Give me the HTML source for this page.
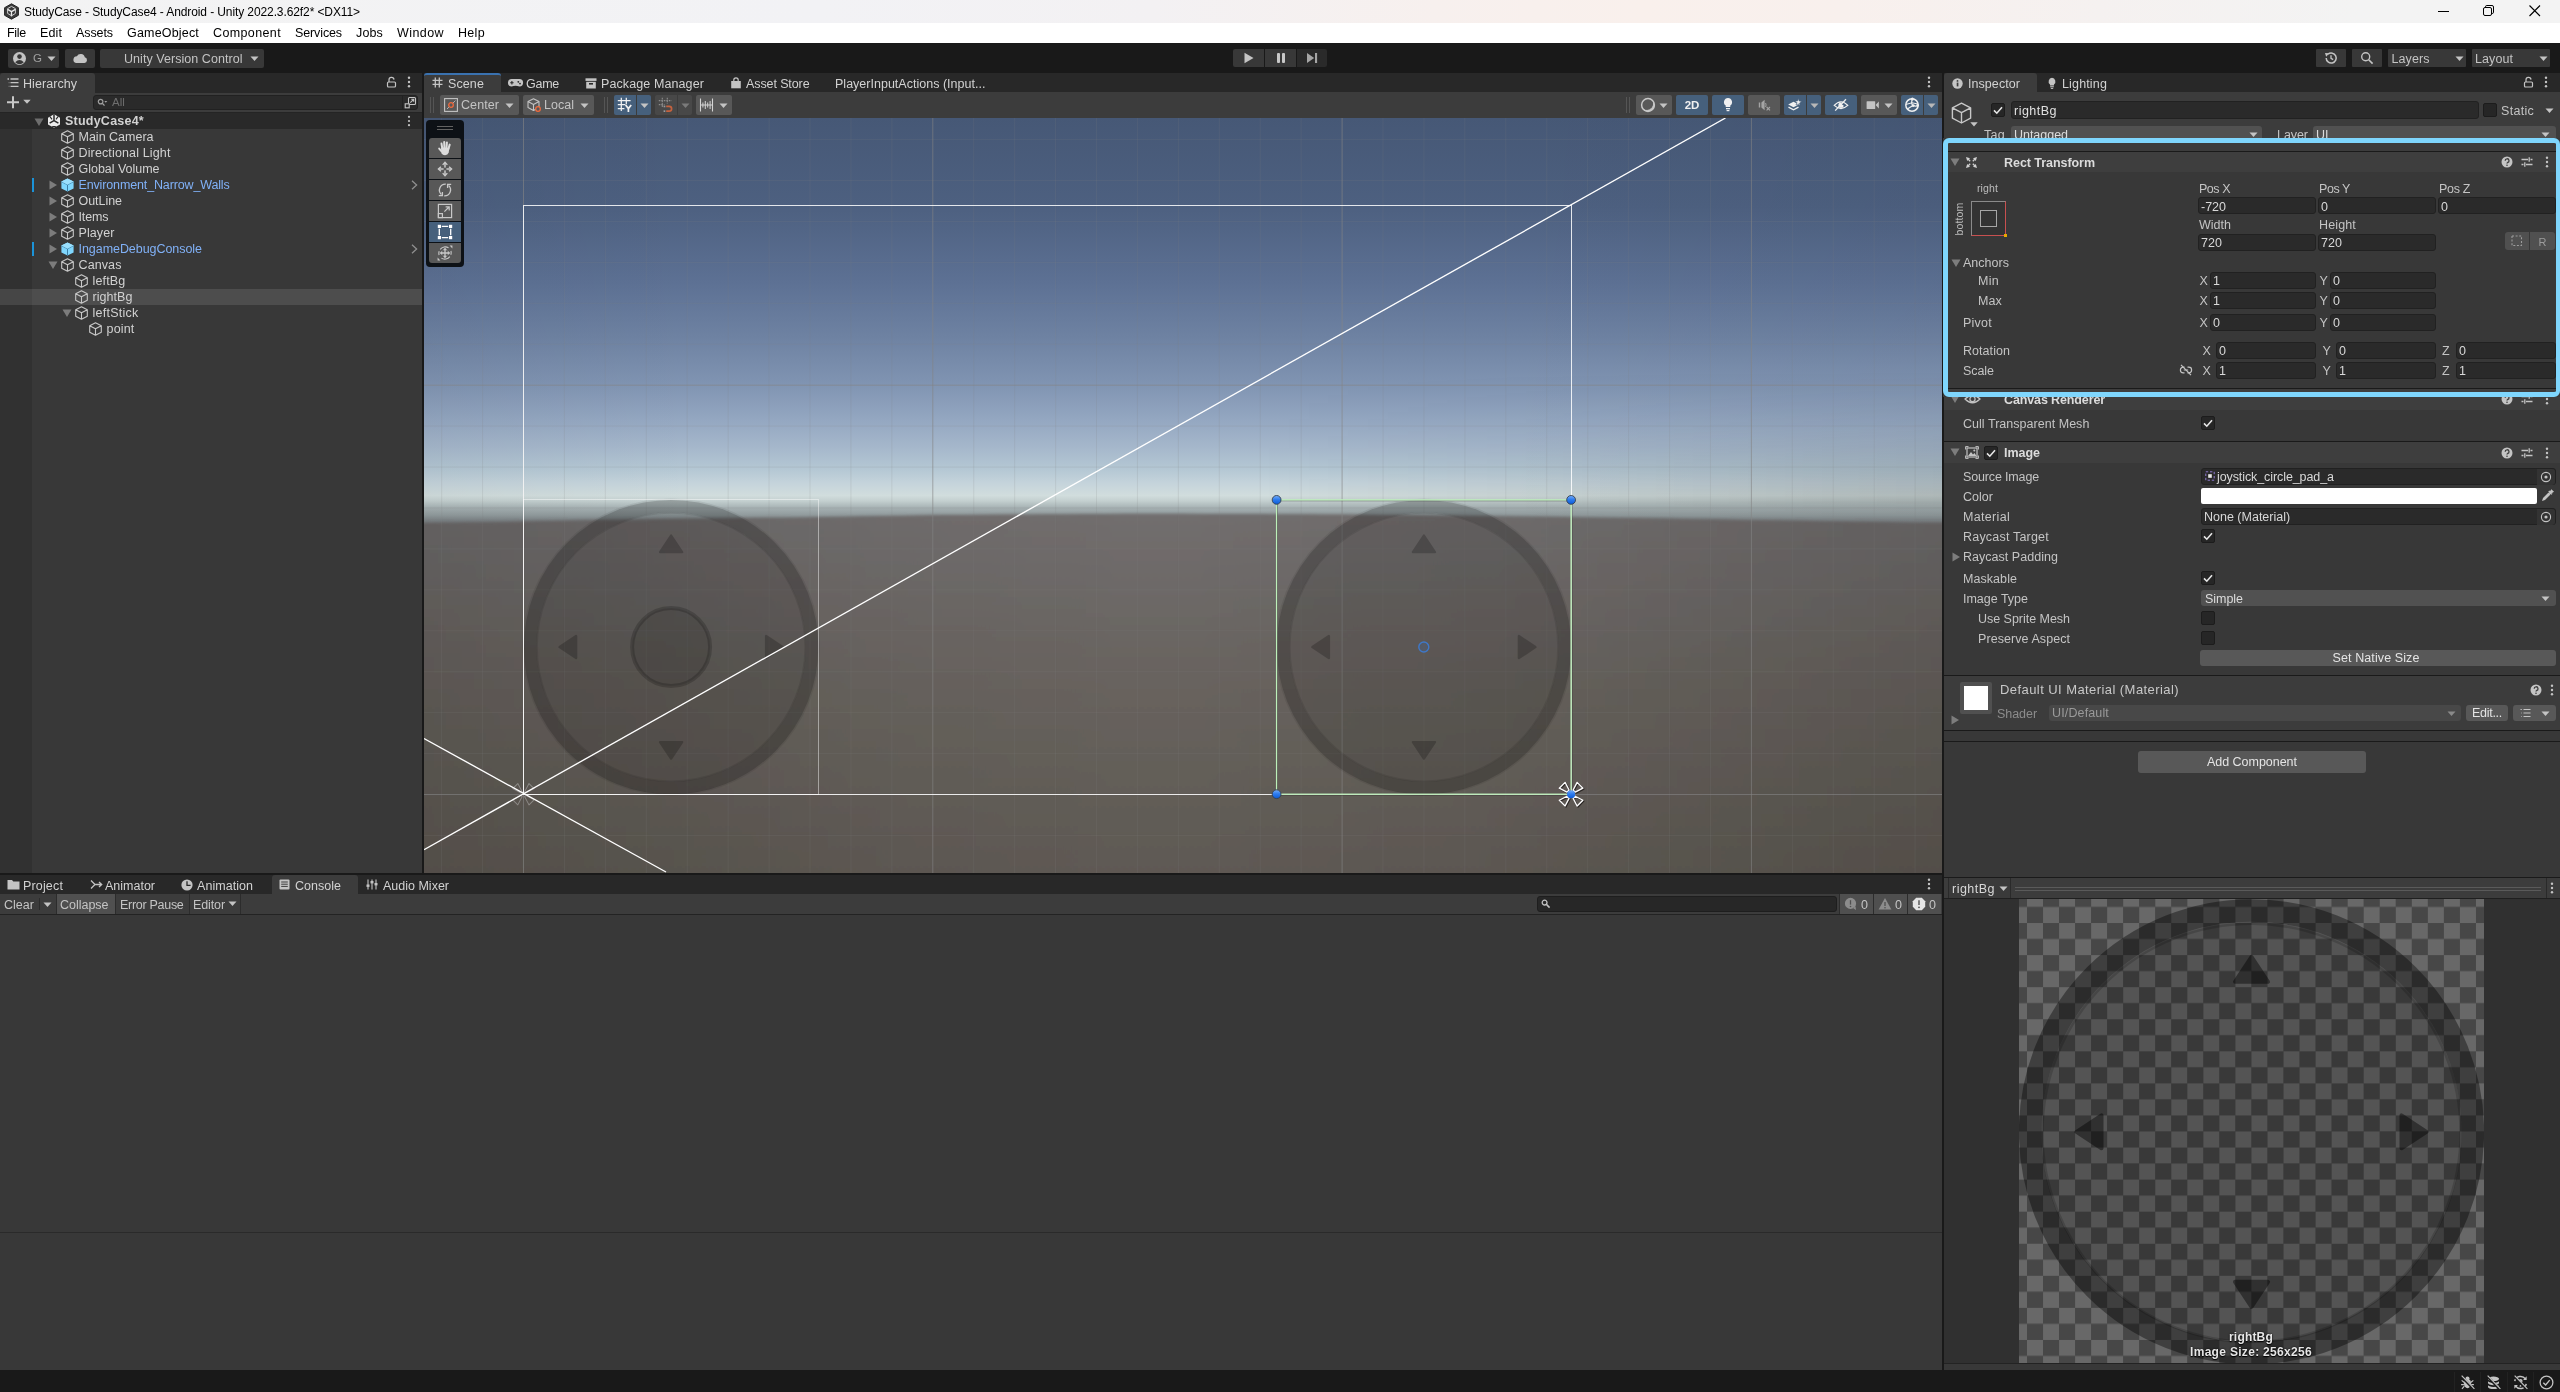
<!DOCTYPE html>
<html><head><meta charset="utf-8"><title>Unity Editor</title>
<style>
html,body{margin:0;padding:0;background:#191919;}
body{width:2560px;height:1392px;position:relative;overflow:hidden;font-family:"Liberation Sans", sans-serif;font-size:12.5px;}
svg{display:block;overflow:visible}
#root{position:absolute;left:0;top:0;width:2560px;height:1392px;will-change:transform;}
</style></head><body><div id="root">
<div style="position:absolute;left:0px;top:0px;width:2560px;height:23px;background:linear-gradient(90deg,#f3f3f3 0%,#f2f2f5 32%,#f3f1f3 45%,#f7f0ee 56%,#f9f0ec 64%,#f8f0ed 72%,#f5f1f0 82%,#f3f3f3 92%,#f3f3f3 100%);"></div>
<svg style="position:absolute;left:3px;top:3px;" width="17" height="17" viewBox="0 0 17 17"><polygon points="8.5,0.8 15.4,4.7 15.4,12.3 8.5,16.2 1.6,12.3 1.6,4.7" fill="#3a3a3a" stroke="#222" stroke-width="1"/>
<path d="M8.5 8.6 L8.5 13.2 M8.5 8.6 L4.6 6.4 M8.5 8.6 L12.4 6.4" stroke="#eee" stroke-width="1.3" fill="none"/>
<path d="M8.5 3.4 L12.4 5.6 L12.4 10.4 L8.5 12.8 L4.6 10.4 L4.6 5.6 Z" stroke="#ddd" stroke-width="0.9" fill="none"/></svg>
<span id="t1" style="position:absolute;top:3.5px;line-height:16px;height:16px;font-size:12px;color:#000;white-space:nowrap;left:24px;letter-spacing:-0.10px;">StudyCase - StudyCase4 - Android - Unity 2022.3.62f2* &lt;DX11&gt;</span>
<svg style="position:absolute;left:2437px;top:5px;" width="14" height="14" viewBox="0 0 14 14"><path d="M1 6.5 H12" stroke="#000" stroke-width="1"/></svg>
<svg style="position:absolute;left:2482px;top:4px;" width="14" height="14" viewBox="0 0 14 14"><rect x="1.5" y="3.5" width="8" height="8" rx="1.5" fill="none" stroke="#000"/><path d="M3.5 3.5 V2.8 Q3.5 1.5 4.8 1.5 H10 Q11.5 1.5 11.5 3 V8.2 Q11.5 9.5 10.2 9.5 H9.5" fill="none" stroke="#000"/></svg>
<svg style="position:absolute;left:2528px;top:4px;" width="14" height="14" viewBox="0 0 14 14"><path d="M1.5 1.5 L12 12 M12 1.5 L1.5 12" stroke="#000" stroke-width="1.1"/></svg>
<div style="position:absolute;left:0px;top:23px;width:2560px;height:20px;background:#ffffff;"></div>
<span id="t2" style="position:absolute;top:25.0px;line-height:16px;height:16px;font-size:12.5px;color:#000;white-space:nowrap;left:7px;letter-spacing:-0.29px;">File</span>
<span id="t3" style="position:absolute;top:25.0px;line-height:16px;height:16px;font-size:12.5px;color:#000;white-space:nowrap;left:40px;letter-spacing:0.11px;">Edit</span>
<span id="t4" style="position:absolute;top:25.0px;line-height:16px;height:16px;font-size:12.5px;color:#000;white-space:nowrap;left:76px;letter-spacing:-0.09px;">Assets</span>
<span id="t5" style="position:absolute;top:25.0px;line-height:16px;height:16px;font-size:12.5px;color:#000;white-space:nowrap;left:127px;letter-spacing:0.18px;">GameObject</span>
<span id="t6" style="position:absolute;top:25.0px;line-height:16px;height:16px;font-size:12.5px;color:#000;white-space:nowrap;left:213px;letter-spacing:0.38px;">Component</span>
<span id="t7" style="position:absolute;top:25.0px;line-height:16px;height:16px;font-size:12.5px;color:#000;white-space:nowrap;left:295px;letter-spacing:-0.12px;">Services</span>
<span id="t8" style="position:absolute;top:25.0px;line-height:16px;height:16px;font-size:12.5px;color:#000;white-space:nowrap;left:356px;letter-spacing:0.15px;">Jobs</span>
<span id="t9" style="position:absolute;top:25.0px;line-height:16px;height:16px;font-size:12.5px;color:#000;white-space:nowrap;left:397px;letter-spacing:0.42px;">Window</span>
<span id="t10" style="position:absolute;top:25.0px;line-height:16px;height:16px;font-size:12.5px;color:#000;white-space:nowrap;left:458px;letter-spacing:0.32px;">Help</span>
<div style="position:absolute;left:0px;top:43px;width:2560px;height:30px;background:#191919;"></div>
<div style="position:absolute;left:8px;top:49px;width:51px;height:19px;background:#383838;border-radius:2px;"></div>
<svg style="position:absolute;left:12px;top:51px;" width="15" height="15" viewBox="0 0 15 15"><circle cx="7.5" cy="7.5" r="6.5" fill="#c4c4c4"/><circle cx="7.5" cy="5.6" r="2.3" fill="#383838"/><path d="M3.2 11.3 Q7.5 6.6 11.8 11.3 Q7.5 15 3.2 11.3Z" fill="#383838"/></svg>
<span id="t11" style="position:absolute;top:51.0px;line-height:15px;height:15px;font-size:11.5px;color:#a0a0a0;white-space:nowrap;left:33px;">G</span>
<svg style="position:absolute;left:47px;top:56px;" width="9" height="6" viewBox="0 0 9 6"><polygon points="0.5,0.5 8.5,0.5 4.5,5" fill="#c4c4c4"/></svg>
<div style="position:absolute;left:65px;top:49px;width:30px;height:19px;background:#383838;border-radius:2px;"></div>
<svg style="position:absolute;left:72px;top:52px;" width="16" height="12" viewBox="0 0 16 12"><path d="M4 11 H12.4 A2.9 2.9 0 0 0 12.8 5.3 A4.2 4.2 0 0 0 4.9 4.3 A3.4 3.4 0 0 0 4 11Z" fill="#c4c4c4"/></svg>
<div style="position:absolute;left:100px;top:49px;width:164px;height:19px;background:#383838;border-radius:2px;"></div>
<span id="t12" style="position:absolute;top:50.5px;line-height:16px;height:16px;font-size:12.5px;color:#c4c4c4;white-space:nowrap;left:124px;letter-spacing:0.05px;">Unity Version Control</span>
<svg style="position:absolute;left:250px;top:56px;" width="9" height="6" viewBox="0 0 9 6"><polygon points="0.5,0.5 8.5,0.5 4.5,5" fill="#c4c4c4"/></svg>
<div style="position:absolute;left:1233px;top:49px;width:31px;height:18px;background:#383838;border-radius:2px 0 0 2px;"></div>
<div style="position:absolute;left:1265px;top:49px;width:31px;height:18px;background:#383838;"></div>
<div style="position:absolute;left:1297px;top:49px;width:30px;height:18px;background:#2a2a2a;border-radius:0 2px 2px 0;"></div>
<svg style="position:absolute;left:1243px;top:52px;" width="12" height="12" viewBox="0 0 12 12"><polygon points="1.5,0.8 10.5,6 1.5,11.2" fill="#c4c4c4"/></svg>
<svg style="position:absolute;left:1275px;top:52px;" width="12" height="12" viewBox="0 0 12 12"><rect x="2" y="1" width="3" height="10" rx="1" fill="#c8c8c8"/><rect x="7" y="1" width="3" height="10" rx="1" fill="#c8c8c8"/></svg>
<svg style="position:absolute;left:1306px;top:52px;" width="12" height="12" viewBox="0 0 12 12"><polygon points="1,1 8.2,6 1,11" fill="#a6a6a6"/><rect x="9" y="1" width="2.1" height="10" fill="#a6a6a6"/></svg>
<div style="position:absolute;left:2316px;top:49px;width:30px;height:18px;background:#383838;border-radius:1px;"></div>
<svg style="position:absolute;left:2324px;top:51px;" width="14" height="14" viewBox="0 0 14 14"><path d="M2.2 7 A5 5 0 1 0 4 3.2" fill="none" stroke="#c4c4c4" stroke-width="1.5"/><polygon points="1,2 5.2,2.2 2.2,5.8" fill="#c4c4c4"/><path d="M7 4.3 V7.3 L9.2 8.6" fill="none" stroke="#c4c4c4" stroke-width="1.3"/></svg>
<div style="position:absolute;left:2352px;top:49px;width:30px;height:18px;background:#383838;border-radius:1px;"></div>
<svg style="position:absolute;left:2360px;top:51px;" width="14" height="14" viewBox="0 0 14 14"><circle cx="5.7" cy="5.7" r="4" fill="none" stroke="#c4c4c4" stroke-width="1.4"/><path d="M8.7 8.7 L12.6 12.6" stroke="#c4c4c4" stroke-width="1.6"/></svg>
<div style="position:absolute;left:2388px;top:49px;width:78px;height:18px;background:#383838;border-radius:1px;"></div>
<span id="t13" style="position:absolute;top:50.5px;line-height:16px;height:16px;font-size:12.5px;color:#c4c4c4;white-space:nowrap;left:2391.5px;letter-spacing:0.08px;">Layers</span>
<svg style="position:absolute;left:2454.5px;top:56px;" width="9" height="6" viewBox="0 0 9 6"><polygon points="0.5,0.5 8.5,0.5 4.5,5" fill="#c4c4c4"/></svg>
<div style="position:absolute;left:2472px;top:49px;width:78px;height:18px;background:#383838;border-radius:1px;"></div>
<span id="t14" style="position:absolute;top:50.5px;line-height:16px;height:16px;font-size:12.5px;color:#c4c4c4;white-space:nowrap;left:2475px;letter-spacing:0.08px;">Layout</span>
<svg style="position:absolute;left:2538.5px;top:56px;" width="9" height="6" viewBox="0 0 9 6"><polygon points="0.5,0.5 8.5,0.5 4.5,5" fill="#c4c4c4"/></svg>
<div style="position:absolute;left:0px;top:1370px;width:2560px;height:22px;background:#191919;"></div>
<div style="position:absolute;left:0px;top:73px;width:2560px;height:1297px;background:#191919;"></div>
<div style="position:absolute;left:0px;top:73px;width:422px;height:20px;background:#282828;"></div>
<div style="position:absolute;left:0px;top:73px;width:95px;height:20px;background:#3c3c3c;border-radius:3px 3px 0 0;"></div>
<svg style="position:absolute;left:7px;top:78px;" width="12" height="10" viewBox="0 0 12 10"><path d="M0.5 1 H2 M3.5 1 H11.5 M3.5 4.7 H11.5 M3.5 8.4 H11.5 M1.8 4.7 H2.3 M1.8 8.4 H2.3" stroke="#c4c4c4" stroke-width="1.3"/></svg>
<span id="t15" style="position:absolute;top:75.5px;line-height:16px;height:16px;font-size:12.5px;color:#d2d2d2;white-space:nowrap;left:23px;letter-spacing:0.06px;">Hierarchy</span>
<svg style="position:absolute;left:386px;top:76px;" width="12" height="12" viewBox="0 0 12 12"><rect x="1.5" y="6" width="8" height="5" rx="1" fill="none" stroke="#c4c4c4" stroke-width="1.2"/><path d="M3 6 V4 A2.5 2.5 0 0 1 8 3.6" fill="none" stroke="#c4c4c4" stroke-width="1.2"/></svg>
<svg style="position:absolute;left:407px;top:76px;" width="4" height="12" viewBox="0 0 4 12"><circle cx="2" cy="1.8" r="1.2" fill="#c4c4c4"/><circle cx="2" cy="6" r="1.2" fill="#c4c4c4"/><circle cx="2" cy="10.2" r="1.2" fill="#c4c4c4"/></svg>
<div style="position:absolute;left:0px;top:93px;width:422px;height:20px;background:#3c3c3c;"></div>
<svg style="position:absolute;left:6px;top:96px;" width="14" height="13" viewBox="0 0 14 13"><path d="M7 0.3 V12.3 M1 6.3 H13" stroke="#c8c8c8" stroke-width="2"/></svg>
<svg style="position:absolute;left:23px;top:99px;" width="8" height="6" viewBox="0 0 8 6"><polygon points="0.3,0.8 7.7,0.8 4,4.8" fill="#c4c4c4"/></svg>
<div style="position:absolute;left:93px;top:95px;width:325px;height:15px;background:#2a2a2a;border-radius:3px;border:1px solid #212121;box-sizing:border-box;"></div>
<svg style="position:absolute;left:97px;top:98px;" width="11" height="9" viewBox="0 0 11 9"><circle cx="3.6" cy="3.6" r="2.3" fill="none" stroke="#a0a0a0" stroke-width="1.2"/><path d="M5.3 5.3 L7.5 7.6" stroke="#a0a0a0" stroke-width="1.3"/><polygon points="7.3,3 10.3,3 8.8,4.8" fill="#a0a0a0"/></svg>
<span id="t16" style="position:absolute;top:95.0px;line-height:15px;height:15px;font-size:11.5px;color:#6e6e6e;white-space:nowrap;left:112px;">All</span>
<div style="position:absolute;left:402px;top:95px;width:1px;height:15px;background:#212121;"></div>
<svg style="position:absolute;left:404px;top:96px;" width="13" height="13" viewBox="0 0 13 13"><rect x="4.5" y="1.5" width="7" height="7" rx="1" fill="none" stroke="#c4c4c4" stroke-width="1.1"/><rect x="1.2" y="7.8" width="4" height="4" fill="#2a2a2a" stroke="#c4c4c4" stroke-width="1.1"/><path d="M6.3 6.7 L9.6 3.4 M7.2 3.3 H9.7 V5.8" fill="none" stroke="#c4c4c4" stroke-width="1.1"/></svg>
<div style="position:absolute;left:0px;top:113px;width:422px;height:760px;background:#383838;"></div>
<div style="position:absolute;left:0px;top:129px;width:32px;height:744px;background:#313131;"></div>
<div style="position:absolute;left:0px;top:113px;width:422px;height:16px;background:#292929;"></div>
<div style="position:absolute;left:0px;top:112px;width:422px;height:1px;background:#242424;"></div>
<svg style="position:absolute;left:34px;top:117.5px;" width="10" height="9" viewBox="0 0 10 9"><polygon points="0.5,0.5 9.5,0.5 5,8" fill="#6e6e6e"/></svg>
<svg style="position:absolute;left:47px;top:114px;" width="14" height="14" viewBox="0 0 14 14"><path d="M7 0.3 L13 3.7 V10.4 L7 13.8 L1 10.4 V3.7 Z" fill="#ececec"/>
<path d="M7 0.3 V6.6 L2.6 9.2 M7 6.6 L11.4 9.2" stroke="#292929" stroke-width="1.5" fill="none"/>
<path d="M3 2.6 L5 5.4 M11 2.6 L9 5.4 M5.2 12.6 H8.8" stroke="#292929" stroke-width="1.1"/></svg>
<span id="t17" style="position:absolute;top:113.0px;line-height:16px;height:16px;font-size:12.5px;color:#d2d2d2;white-space:nowrap;font-weight:bold;left:65px;letter-spacing:0.23px;">StudyCase4*</span>
<svg style="position:absolute;left:407px;top:115px;" width="4" height="12" viewBox="0 0 4 12"><circle cx="2" cy="1.8" r="1.1" fill="#c4c4c4"/><circle cx="2" cy="6" r="1.1" fill="#c4c4c4"/><circle cx="2" cy="10.2" r="1.1" fill="#c4c4c4"/></svg>
<svg style="position:absolute;left:61px;top:130px;" width="13" height="14" viewBox="0 0 13 14"><path d="M6.5 0.8 L12.3 3.8 V10.2 L6.5 13.2 L0.7 10.2 V3.8 Z M0.7 3.8 L6.5 6.8 L12.3 3.8 M6.5 6.8 V13.2" fill="none" stroke="#c8c8c8" stroke-width="1.1" stroke-linejoin="round"/></svg>
<span id="t18" style="position:absolute;top:129.0px;line-height:16px;height:16px;font-size:12.5px;color:#d2d2d2;white-space:nowrap;left:78.5px;letter-spacing:-0.00px;">Main Camera</span>
<svg style="position:absolute;left:61px;top:146px;" width="13" height="14" viewBox="0 0 13 14"><path d="M6.5 0.8 L12.3 3.8 V10.2 L6.5 13.2 L0.7 10.2 V3.8 Z M0.7 3.8 L6.5 6.8 L12.3 3.8 M6.5 6.8 V13.2" fill="none" stroke="#c8c8c8" stroke-width="1.1" stroke-linejoin="round"/></svg>
<span id="t19" style="position:absolute;top:145.0px;line-height:16px;height:16px;font-size:12.5px;color:#d2d2d2;white-space:nowrap;left:78.5px;letter-spacing:0.14px;">Directional Light</span>
<svg style="position:absolute;left:61px;top:162px;" width="13" height="14" viewBox="0 0 13 14"><path d="M6.5 0.8 L12.3 3.8 V10.2 L6.5 13.2 L0.7 10.2 V3.8 Z M0.7 3.8 L6.5 6.8 L12.3 3.8 M6.5 6.8 V13.2" fill="none" stroke="#c8c8c8" stroke-width="1.1" stroke-linejoin="round"/></svg>
<span id="t20" style="position:absolute;top:161.0px;line-height:16px;height:16px;font-size:12.5px;color:#d2d2d2;white-space:nowrap;left:78.5px;letter-spacing:-0.02px;">Global Volume</span>
<svg style="position:absolute;left:61px;top:178px;" width="13" height="14" viewBox="0 0 13 14"><path d="M6.5 0.4 L12.6 3.6 V10.4 L6.5 13.6 L0.4 10.4 V3.6 Z" fill="#7fd6fd"/><path d="M0.4 3.6 L6.5 6.8 L12.6 3.6 M6.5 6.8 V13.6" fill="none" stroke="#3a7ea6" stroke-width="1"/><path d="M6.5 0.4 L12.6 3.6 L6.5 6.8 L0.4 3.6Z" fill="#9adffd"/></svg>
<span id="t21" style="position:absolute;top:177.0px;line-height:16px;height:16px;font-size:12.5px;color:#80b1f7;white-space:nowrap;left:78.5px;letter-spacing:-0.14px;">Environment_Narrow_Walls</span>
<svg style="position:absolute;left:49px;top:180px;" width="9" height="10" viewBox="0 0 9 10"><polygon points="0.5,0.5 8,5 0.5,9.5" fill="#7c7c7c"/></svg>
<div style="position:absolute;left:32px;top:178px;width:2px;height:14px;background:#1b93d8;"></div>
<svg style="position:absolute;left:411px;top:180px;" width="7" height="10" viewBox="0 0 7 10"><path d="M1 0.8 L5.6 5 L1 9.2" fill="none" stroke="#8f8f8f" stroke-width="1.3"/></svg>
<svg style="position:absolute;left:61px;top:194px;" width="13" height="14" viewBox="0 0 13 14"><path d="M6.5 0.8 L12.3 3.8 V10.2 L6.5 13.2 L0.7 10.2 V3.8 Z M0.7 3.8 L6.5 6.8 L12.3 3.8 M6.5 6.8 V13.2" fill="none" stroke="#c8c8c8" stroke-width="1.1" stroke-linejoin="round"/></svg>
<span id="t22" style="position:absolute;top:193.0px;line-height:16px;height:16px;font-size:12.5px;color:#d2d2d2;white-space:nowrap;left:78.5px;letter-spacing:-0.04px;">OutLine</span>
<svg style="position:absolute;left:49px;top:196px;" width="9" height="10" viewBox="0 0 9 10"><polygon points="0.5,0.5 8,5 0.5,9.5" fill="#7c7c7c"/></svg>
<svg style="position:absolute;left:61px;top:210px;" width="13" height="14" viewBox="0 0 13 14"><path d="M6.5 0.8 L12.3 3.8 V10.2 L6.5 13.2 L0.7 10.2 V3.8 Z M0.7 3.8 L6.5 6.8 L12.3 3.8 M6.5 6.8 V13.2" fill="none" stroke="#c8c8c8" stroke-width="1.1" stroke-linejoin="round"/></svg>
<span id="t23" style="position:absolute;top:209.0px;line-height:16px;height:16px;font-size:12.5px;color:#d2d2d2;white-space:nowrap;left:78.5px;letter-spacing:-0.11px;">Items</span>
<svg style="position:absolute;left:49px;top:212px;" width="9" height="10" viewBox="0 0 9 10"><polygon points="0.5,0.5 8,5 0.5,9.5" fill="#7c7c7c"/></svg>
<svg style="position:absolute;left:61px;top:226px;" width="13" height="14" viewBox="0 0 13 14"><path d="M6.5 0.8 L12.3 3.8 V10.2 L6.5 13.2 L0.7 10.2 V3.8 Z M0.7 3.8 L6.5 6.8 L12.3 3.8 M6.5 6.8 V13.2" fill="none" stroke="#c8c8c8" stroke-width="1.1" stroke-linejoin="round"/></svg>
<span id="t24" style="position:absolute;top:225.0px;line-height:16px;height:16px;font-size:12.5px;color:#d2d2d2;white-space:nowrap;left:78.5px;letter-spacing:0.09px;">Player</span>
<svg style="position:absolute;left:49px;top:228px;" width="9" height="10" viewBox="0 0 9 10"><polygon points="0.5,0.5 8,5 0.5,9.5" fill="#7c7c7c"/></svg>
<svg style="position:absolute;left:61px;top:242px;" width="13" height="14" viewBox="0 0 13 14"><path d="M6.5 0.4 L12.6 3.6 V10.4 L6.5 13.6 L0.4 10.4 V3.6 Z" fill="#7fd6fd"/><path d="M0.4 3.6 L6.5 6.8 L12.6 3.6 M6.5 6.8 V13.6" fill="none" stroke="#3a7ea6" stroke-width="1"/><path d="M6.5 0.4 L12.6 3.6 L6.5 6.8 L0.4 3.6Z" fill="#9adffd"/></svg>
<span id="t25" style="position:absolute;top:241.0px;line-height:16px;height:16px;font-size:12.5px;color:#80b1f7;white-space:nowrap;left:78.5px;letter-spacing:-0.05px;">IngameDebugConsole</span>
<svg style="position:absolute;left:49px;top:244px;" width="9" height="10" viewBox="0 0 9 10"><polygon points="0.5,0.5 8,5 0.5,9.5" fill="#7c7c7c"/></svg>
<div style="position:absolute;left:32px;top:242px;width:2px;height:14px;background:#1b93d8;"></div>
<svg style="position:absolute;left:411px;top:244px;" width="7" height="10" viewBox="0 0 7 10"><path d="M1 0.8 L5.6 5 L1 9.2" fill="none" stroke="#8f8f8f" stroke-width="1.3"/></svg>
<svg style="position:absolute;left:61px;top:258px;" width="13" height="14" viewBox="0 0 13 14"><path d="M6.5 0.8 L12.3 3.8 V10.2 L6.5 13.2 L0.7 10.2 V3.8 Z M0.7 3.8 L6.5 6.8 L12.3 3.8 M6.5 6.8 V13.2" fill="none" stroke="#c8c8c8" stroke-width="1.1" stroke-linejoin="round"/></svg>
<span id="t26" style="position:absolute;top:257.0px;line-height:16px;height:16px;font-size:12.5px;color:#d2d2d2;white-space:nowrap;left:78.5px;letter-spacing:0.10px;">Canvas</span>
<svg style="position:absolute;left:48px;top:261px;" width="10" height="9" viewBox="0 0 10 9"><polygon points="0.5,0.5 9.5,0.5 5,8" fill="#7c7c7c"/></svg>
<svg style="position:absolute;left:75px;top:274px;" width="13" height="14" viewBox="0 0 13 14"><path d="M6.5 0.8 L12.3 3.8 V10.2 L6.5 13.2 L0.7 10.2 V3.8 Z M0.7 3.8 L6.5 6.8 L12.3 3.8 M6.5 6.8 V13.2" fill="none" stroke="#c8c8c8" stroke-width="1.1" stroke-linejoin="round"/></svg>
<span id="t27" style="position:absolute;top:273.0px;line-height:16px;height:16px;font-size:12.5px;color:#d2d2d2;white-space:nowrap;left:92.5px;letter-spacing:0.17px;">leftBg</span>
<div style="position:absolute;left:0px;top:289px;width:422px;height:16px;background:#4d4d4d;"></div>
<div style="position:absolute;left:0px;top:289px;width:32px;height:16px;background:#464646;"></div>
<svg style="position:absolute;left:75px;top:290px;" width="13" height="14" viewBox="0 0 13 14"><path d="M6.5 0.8 L12.3 3.8 V10.2 L6.5 13.2 L0.7 10.2 V3.8 Z M0.7 3.8 L6.5 6.8 L12.3 3.8 M6.5 6.8 V13.2" fill="none" stroke="#c8c8c8" stroke-width="1.1" stroke-linejoin="round"/></svg>
<span id="t28" style="position:absolute;top:289.0px;line-height:16px;height:16px;font-size:12.5px;color:#d2d2d2;white-space:nowrap;left:92.5px;letter-spacing:0.06px;">rightBg</span>
<svg style="position:absolute;left:75px;top:306px;" width="13" height="14" viewBox="0 0 13 14"><path d="M6.5 0.8 L12.3 3.8 V10.2 L6.5 13.2 L0.7 10.2 V3.8 Z M0.7 3.8 L6.5 6.8 L12.3 3.8 M6.5 6.8 V13.2" fill="none" stroke="#c8c8c8" stroke-width="1.1" stroke-linejoin="round"/></svg>
<span id="t29" style="position:absolute;top:305.0px;line-height:16px;height:16px;font-size:12.5px;color:#d2d2d2;white-space:nowrap;left:92.5px;letter-spacing:0.25px;">leftStick</span>
<svg style="position:absolute;left:62px;top:309px;" width="10" height="9" viewBox="0 0 10 9"><polygon points="0.5,0.5 9.5,0.5 5,8" fill="#7c7c7c"/></svg>
<svg style="position:absolute;left:89px;top:322px;" width="13" height="14" viewBox="0 0 13 14"><path d="M6.5 0.8 L12.3 3.8 V10.2 L6.5 13.2 L0.7 10.2 V3.8 Z M0.7 3.8 L6.5 6.8 L12.3 3.8 M6.5 6.8 V13.2" fill="none" stroke="#c8c8c8" stroke-width="1.1" stroke-linejoin="round"/></svg>
<span id="t30" style="position:absolute;top:321.0px;line-height:16px;height:16px;font-size:12.5px;color:#d2d2d2;white-space:nowrap;left:106.5px;letter-spacing:0.18px;">point</span>
<div style="position:absolute;left:424px;top:73px;width:1518px;height:19px;background:#282828;"></div>
<div style="position:absolute;left:424px;top:73px;width:77px;height:19px;background:#3c3c3c;border-radius:3px 3px 0 0;border-top:2px solid #3a72b0;box-sizing:border-box;"></div>
<svg style="position:absolute;left:432px;top:77px;" width="11" height="11" viewBox="0 0 11 11"><path d="M3.3 0.5 V10.5 M7.3 0.5 V10.5 M0.5 3.3 H10.5 M0.5 7.3 H10.5" stroke="#c4c4c4" stroke-width="1.3"/></svg>
<span id="t31" style="position:absolute;top:75.5px;line-height:16px;height:16px;font-size:12.5px;color:#d2d2d2;white-space:nowrap;left:448px;letter-spacing:0.11px;">Scene</span>
<svg style="position:absolute;left:508px;top:78px;" width="15" height="10" viewBox="0 0 15 10"><path d="M3.6 1 H11.4 A3.6 3.6 0 0 1 11.4 8.4 Q7.5 7 3.6 8.4 A3.6 3.6 0 0 1 3.6 1Z" fill="#c4c4c4"/><path d="M3.9 3 V6.4 M2.2 4.7 H5.6" stroke="#282828" stroke-width="1.1"/><circle cx="10.3" cy="3.8" r="0.9" fill="#282828"/><circle cx="12" cy="5.6" r="0.9" fill="#282828"/></svg>
<span id="t32" style="position:absolute;top:75.5px;line-height:16px;height:16px;font-size:12.5px;color:#d2d2d2;white-space:nowrap;left:526px;letter-spacing:-0.26px;">Game</span>
<svg style="position:absolute;left:585px;top:78px;" width="12" height="11" viewBox="0 0 12 11"><rect x="0.5" y="0.3" width="11" height="2.6" fill="#c4c4c4"/><path d="M1.2 3.8 H10.8 V10.5 H1.2Z" fill="#c4c4c4"/><rect x="4" y="5" width="4" height="1.6" fill="#282828"/></svg>
<span id="t33" style="position:absolute;top:75.5px;line-height:16px;height:16px;font-size:12.5px;color:#d2d2d2;white-space:nowrap;left:601px;letter-spacing:0.10px;">Package Manager</span>
<svg style="position:absolute;left:730px;top:77px;" width="12" height="12" viewBox="0 0 12 12"><path d="M1.2 4 H10.8 V11.3 H1.2Z" fill="#c4c4c4"/><path d="M3.8 4.5 V3 A2.2 2.2 0 0 1 8.2 3 V4.5" fill="none" stroke="#c4c4c4" stroke-width="1.2"/></svg>
<span id="t34" style="position:absolute;top:75.5px;line-height:16px;height:16px;font-size:12.5px;color:#d2d2d2;white-space:nowrap;left:746px;letter-spacing:-0.10px;">Asset Store</span>
<span id="t35" style="position:absolute;top:75.5px;line-height:16px;height:16px;font-size:12.5px;color:#d2d2d2;white-space:nowrap;left:835px;letter-spacing:0.01px;">PlayerInputActions (Input...</span>
<svg style="position:absolute;left:1927px;top:76px;" width="4" height="12" viewBox="0 0 4 12"><circle cx="2" cy="1.8" r="1.2" fill="#c4c4c4"/><circle cx="2" cy="6" r="1.2" fill="#c4c4c4"/><circle cx="2" cy="10.2" r="1.2" fill="#c4c4c4"/></svg>
<div style="position:absolute;left:424px;top:92px;width:1518px;height:26px;background:#3c3c3c;"></div>
<div style="position:absolute;left:430px;top:97px;width:1px;height:16px;background:#555;"></div>
<div style="position:absolute;left:433px;top:97px;width:1px;height:16px;background:#555;"></div>
<div style="position:absolute;left:604px;top:97px;width:1px;height:16px;background:#555;"></div>
<div style="position:absolute;left:607px;top:97px;width:1px;height:16px;background:#555;"></div>
<div style="position:absolute;left:1626px;top:97px;width:1px;height:16px;background:#555;"></div>
<div style="position:absolute;left:1629px;top:97px;width:1px;height:16px;background:#555;"></div>
<div style="position:absolute;left:440px;top:95px;width:79px;height:20px;background:#585858;border-radius:2px;"></div>
<svg style="position:absolute;left:444px;top:98px;" width="14" height="14" viewBox="0 0 14 14"><rect x="0.6" y="0.6" width="12.8" height="12.8" fill="none" stroke="#c4c4c4" stroke-width="1.1"/><path d="M3 11 L11.5 2.5" stroke="#c4c4c4" stroke-width="0.8"/><circle cx="7" cy="7" r="2.3" fill="#585858" stroke="#f0693c" stroke-width="1.3"/></svg>
<span id="t36" style="position:absolute;top:97.0px;line-height:16px;height:16px;font-size:12.5px;color:#c4c4c4;white-space:nowrap;left:461px;letter-spacing:0.08px;">Center</span>
<svg style="position:absolute;left:504.5px;top:102.5px;" width="9" height="6" viewBox="0 0 9 6"><polygon points="0.5,0.5 8.5,0.5 4.5,5" fill="#c4c4c4"/></svg>
<div style="position:absolute;left:523px;top:95px;width:71px;height:20px;background:#585858;border-radius:2px;"></div>
<svg style="position:absolute;left:527px;top:98px;" width="15" height="15" viewBox="0 0 15 15"><path d="M6.5 0.8 L12 3.6 V9.6 L6.5 12.4 L1 9.6 V3.6 Z M1 3.6 L6.5 6.4 L12 3.6 M6.5 6.4 V12.4" fill="none" stroke="#c4c4c4" stroke-width="1.1" stroke-linejoin="round"/><circle cx="11" cy="11" r="2.3" fill="#585858" stroke="#f0693c" stroke-width="1.3"/></svg>
<span id="t37" style="position:absolute;top:97.0px;line-height:16px;height:16px;font-size:12.5px;color:#c4c4c4;white-space:nowrap;left:544px;letter-spacing:0.02px;">Local</span>
<svg style="position:absolute;left:579.5px;top:102.5px;" width="9" height="6" viewBox="0 0 9 6"><polygon points="0.5,0.5 8.5,0.5 4.5,5" fill="#c4c4c4"/></svg>
<div style="position:absolute;left:614px;top:95px;width:22px;height:20px;background:#46607c;border-radius:2px 0 0 2px;"></div>
<div style="position:absolute;left:637px;top:95px;width:14px;height:20px;background:#46607c;border-radius:0 2px 2px 0;"></div>
<svg style="position:absolute;left:617px;top:97px;" width="16" height="16" viewBox="0 0 16 16"><path d="M4.3 0.8 V14 M9.3 0.8 V7.2 M0.8 3.6 H13.6 M0.8 7.6 H8.4 M0.8 11.6 H7.4" stroke="#f2f2f2" stroke-width="1.25"/><path d="M8.6 8 L11.4 11.6 L14.2 8 M11.4 11.6 V15" stroke="#f2f2f2" stroke-width="1.7" fill="none"/></svg>
<svg style="position:absolute;left:639.5px;top:102.5px;" width="9" height="6" viewBox="0 0 9 6"><polygon points="0.5,0.5 8.5,0.5 4.5,5" fill="#c4c4c4"/></svg>
<div style="position:absolute;left:655px;top:95px;width:22px;height:20px;background:#484848;border-radius:2px 0 0 2px;"></div>
<div style="position:absolute;left:678px;top:95px;width:14px;height:20px;background:#484848;border-radius:0 2px 2px 0;"></div>
<svg style="position:absolute;left:658px;top:97px;" width="16" height="16" viewBox="0 0 16 16"><path d="M4.3 0.8 V10 M9.3 0.8 V6.5 M0.8 3.6 H13.6 M0.8 7.6 H6.5" stroke="#8c8c8c" stroke-width="1.1" stroke-dasharray="1.6 0.9"/><path d="M8.2 9.4 H11.2 A2.4 2.4 0 0 1 11.2 14.2 H8.2" stroke="#c4623f" stroke-width="1.7" fill="none"/><rect x="5.6" y="8.6" width="1.7" height="1.7" fill="#9a9a9a"/><rect x="5.6" y="13.3" width="1.7" height="1.7" fill="#9a9a9a"/></svg>
<svg style="position:absolute;left:680.5px;top:102.5px;" width="9" height="6" viewBox="0 0 9 6"><polygon points="0.5,0.5 8.5,0.5 4.5,5" fill="#7a7a7a"/></svg>
<div style="position:absolute;left:696px;top:95px;width:36px;height:20px;background:#585858;border-radius:2px;"></div>
<svg style="position:absolute;left:699px;top:98px;" width="16" height="14" viewBox="0 0 16 14"><path d="M1.5 0.5 V13.5 M13.5 0.5 V13.5 M1.5 7 H13.5" stroke="#d4d4d4" stroke-width="1.1"/><path d="M3.9 4.5 V9.5 M6.3 3 V11 M8.7 4.5 V9.5 M11.1 3 V11" stroke="#d4d4d4" stroke-width="1"/></svg>
<svg style="position:absolute;left:718.5px;top:102.5px;" width="9" height="6" viewBox="0 0 9 6"><polygon points="0.5,0.5 8.5,0.5 4.5,5" fill="#c4c4c4"/></svg>
<div style="position:absolute;left:1636px;top:95px;width:36px;height:20px;background:#585858;border-radius:2px;"></div>
<svg style="position:absolute;left:1640px;top:97px;" width="16" height="16" viewBox="0 0 16 16"><circle cx="8" cy="8" r="6.4" fill="none" stroke="#c8c8c8" stroke-width="1.5"/><path d="M13.6 5.2 A6.4 6.4 0 0 1 4 13 A7.2 7.2 0 0 0 13.6 5.2Z" fill="#c8c8c8" stroke="#c8c8c8" stroke-width="0.8"/></svg>
<svg style="position:absolute;left:1658.5px;top:102.5px;" width="9" height="6" viewBox="0 0 9 6"><polygon points="0.5,0.5 8.5,0.5 4.5,5" fill="#c4c4c4"/></svg>
<div style="position:absolute;left:1676px;top:95px;width:32px;height:20px;background:#46607c;border-radius:2px;"></div>
<span id="t38" style="position:absolute;top:97.5px;line-height:15px;height:15px;font-size:11.5px;color:#f0f0f0;white-space:nowrap;font-weight:bold;left:1692px;transform:translateX(-50%);">2D</span>
<div style="position:absolute;left:1712px;top:95px;width:32px;height:20px;background:#46607c;border-radius:2px;"></div>
<svg style="position:absolute;left:1722px;top:97px;" width="12" height="16" viewBox="0 0 12 16"><path d="M6 1 A4.2 4.2 0 0 1 8.3 8.6 V10 H3.7 V8.6 A4.2 4.2 0 0 1 6 1Z" fill="#f0f0f0"/><rect x="4" y="11" width="4" height="1.3" fill="#f0f0f0"/><rect x="4.6" y="13" width="2.8" height="1.2" fill="#f0f0f0"/></svg>
<div style="position:absolute;left:1748px;top:95px;width:32px;height:20px;background:#585858;border-radius:2px;"></div>
<svg style="position:absolute;left:1757px;top:98px;" width="16" height="14" viewBox="0 0 16 14"><path d="M1.8 4.6 H3.2 V9.4 H1.8Z M4.4 4.6 L7.6 1.8 V12.2 L4.4 9.4Z" fill="#a4a4a4"/><path d="M8.6 5 Q9.6 7 8.6 9" stroke="#a4a4a4" fill="none" stroke-width="1"/><path d="M9.6 9 L13 12.4 M13 9 L9.6 12.4" stroke="#a4a4a4" stroke-width="1.1"/></svg>
<div style="position:absolute;left:1784px;top:95px;width:22px;height:20px;background:#46607c;border-radius:2px 0 0 2px;"></div>
<div style="position:absolute;left:1807px;top:95px;width:14px;height:20px;background:#46607c;border-radius:0 2px 2px 0;"></div>
<svg style="position:absolute;left:1787px;top:98px;" width="16" height="14" viewBox="0 0 16 14"><path d="M1.5 9.2 L6.5 11.8 L11.5 9.2" stroke="#f0f0f0" fill="none" stroke-width="1.4"/><path d="M1.2 6.4 L6.5 3.8 L11.8 6.4 L6.5 9.2Z" fill="#f0f0f0"/><path d="M11.3 0.4 L12.2 2.9 L14.8 3.5 L12.6 5 L13 7.6 L11.3 6 L9 7 L9.9 4.7 L8.2 2.9 L10.6 2.9Z" fill="#f0f0f0" stroke="#46607c" stroke-width="0.6"/></svg>
<svg style="position:absolute;left:1809.5px;top:102.5px;" width="9" height="6" viewBox="0 0 9 6"><polygon points="0.5,0.5 8.5,0.5 4.5,5" fill="#b8b8b8"/></svg>
<div style="position:absolute;left:1825px;top:95px;width:32px;height:20px;background:#46607c;border-radius:2px;"></div>
<svg style="position:absolute;left:1833px;top:98px;" width="16" height="14" viewBox="0 0 16 14"><path d="M1.2 7.4 Q8 0.2 14.8 7.4 Q8 13.6 1.2 7.4Z" fill="none" stroke="#f0f0f0" stroke-width="1.2"/><path d="M8 4.6 A2.6 2.6 0 1 0 10.6 7.2 Q9 7.4 8 4.6Z" fill="#f0f0f0"/><path d="M2.2 12.6 L13 1.2" stroke="#f0f0f0" stroke-width="1.3"/></svg>
<div style="position:absolute;left:1861px;top:95px;width:36px;height:20px;background:#585858;border-radius:2px;"></div>
<svg style="position:absolute;left:1866px;top:99px;" width="15" height="12" viewBox="0 0 15 12"><rect x="0.6" y="2.2" width="8.6" height="7.8" rx="0.6" fill="#c4c4c4"/><path d="M9.6 6.1 L12.8 2.6 V9.6Z" fill="#c4c4c4"/></svg>
<svg style="position:absolute;left:1884px;top:102.5px;" width="9" height="6" viewBox="0 0 9 6"><polygon points="0.5,0.5 8.5,0.5 4.5,5" fill="#c4c4c4"/></svg>
<div style="position:absolute;left:1901px;top:95px;width:22px;height:20px;background:#46607c;border-radius:2px 0 0 2px;"></div>
<div style="position:absolute;left:1924px;top:95px;width:14px;height:20px;background:#46607c;border-radius:0 2px 2px 0;"></div>
<svg style="position:absolute;left:1904px;top:97px;" width="16" height="16" viewBox="0 0 16 16"><circle cx="8" cy="8" r="6.2" fill="none" stroke="#f0f0f0" stroke-width="1.5"/><path d="M8.4 1.8 Q6.6 7 9 8.6 Q12 9.6 14 8.4 M9 8.6 Q6 10.6 3.4 12" stroke="#f0f0f0" stroke-width="1.2" fill="none"/><path d="M2 7.4 Q8 4.4 14 7" stroke="#f0f0f0" stroke-width="1" fill="none"/><circle cx="8.4" cy="2" r="1.5" fill="#f0f0f0"/><circle cx="9.2" cy="8.6" r="1.4" fill="#f0f0f0"/><circle cx="13.6" cy="8.4" r="1.3" fill="#f0f0f0"/></svg>
<svg style="position:absolute;left:1926.5px;top:102.5px;" width="9" height="6" viewBox="0 0 9 6"><polygon points="0.5,0.5 8.5,0.5 4.5,5" fill="#b8b8b8"/></svg>
<div style="position:absolute;left:424px;top:118px;width:1518px;height:755px;background:linear-gradient(180deg, rgb(70, 88, 118) 0.0px, rgb(77, 96, 128) 88.0px, rgb(93, 113, 148) 165.0px, rgb(110, 130, 162) 219.0px, rgb(128, 148, 178) 266.0px, rgb(148, 167, 193) 302.0px, rgb(165, 183, 203) 329.0px, rgb(181, 200, 212) 352.0px, rgb(196, 211, 219) 364.5px, rgb(209, 221, 221) 377.6px, rgb(195, 207, 207) 383.0px, rgb(178, 190, 191) 387.0px, rgb(165, 176, 178) 390.0px, rgb(145, 155, 157) 397.0px, rgb(125, 132, 135) 402.0px, rgb(110, 112, 114) 408.0px);overflow:hidden;"><div style="position:absolute;left:0;top:0;width:1518px;height:755px;background:linear-gradient(90deg,rgba(0,0,0,0.035) 0%,rgba(0,0,0,0) 18%,rgba(0,0,0,0) 70%,rgba(0,0,0,0.03) 100%);"></div><div style="position:absolute;left:0;top:252px;width:1518px;height:150px;background:linear-gradient(90deg,rgba(0,0,0,0) 0%,rgba(0,0,0,0) 55%,rgba(0,0,0,0.05) 72%,rgba(0,0,0,0.14) 100%);-webkit-mask-image:linear-gradient(180deg,rgba(0,0,0,0) 0px,rgba(0,0,0,0.3) 60px,rgba(0,0,0,0.75) 100px,#000 126px,#000 132px,rgba(0,0,0,0.3) 141px,rgba(0,0,0,0) 150px);mask-image:linear-gradient(180deg,rgba(0,0,0,0) 0px,rgba(0,0,0,0.3) 60px,rgba(0,0,0,0.75) 100px,#000 126px,#000 132px,rgba(0,0,0,0.3) 141px,rgba(0,0,0,0) 150px);"></div><svg style="position:absolute;left:0;top:0" width="1518" height="755" viewBox="0 0 1518 755">
<defs><filter id="gb" x="-2%" y="-2%" width="104%" height="104%"><feGaussianBlur stdDeviation="1.5"/></filter>
<linearGradient id="gv" x1="0" y1="395" x2="0" y2="755" gradientUnits="userSpaceOnUse"><stop offset="0" stop-color="#716e6e"/><stop offset="0.15" stop-color="#6e6a69"/><stop offset="0.5" stop-color="#67625d"/><stop offset="1" stop-color="#5e5953"/></linearGradient>
<linearGradient id="gh" x1="0" y1="0" x2="1518" y2="0" gradientUnits="userSpaceOnUse"><stop offset="0" stop-color="#000" stop-opacity="0.13"/><stop offset="0.3" stop-color="#000" stop-opacity="0.03"/><stop offset="0.48" stop-color="#000" stop-opacity="0"/><stop offset="0.7" stop-color="#000" stop-opacity="0.03"/><stop offset="1" stop-color="#000" stop-opacity="0.13"/></linearGradient></defs>
<g filter="url(#gb)"><path d="M-20 775 L-20 404.97 L0 404.91 L20 404.81 L40 404.61 L60 404.31 L80 403.94 L100 403.51 L120 403.06 L140 402.65 L160 402.29 L180 401.97 L200 401.69 L220 401.40 L240 401.12 L260 400.84 L280 400.58 L300 400.33 L320 400.10 L340 399.87 L360 399.64 L380 399.40 L400 399.10 L420 398.74 L440 398.37 L460 398.00 L480 397.64 L500 397.35 L520 397.11 L540 396.90 L560 396.70 L580 396.53 L600 396.38 L620 396.25 L640 396.13 L660 396.02 L680 395.91 L700 395.84 L720 395.80 L740 395.80 L760 395.84 L780 395.90 L800 395.96 L820 396.03 L840 396.09 L860 396.18 L880 396.29 L900 396.43 L920 396.58 L940 396.75 L960 396.93 L980 397.10 L1000 397.29 L1020 397.50 L1040 397.73 L1060 397.98 L1080 398.25 L1100 398.52 L1120 398.80 L1140 399.09 L1160 399.38 L1180 399.68 L1200 399.99 L1220 400.31 L1240 400.62 L1260 400.93 L1280 401.25 L1300 401.56 L1320 401.88 L1340 402.19 L1360 402.51 L1380 402.82 L1400 403.13 L1420 403.45 L1440 403.76 L1460 404.08 L1480 404.39 L1500 404.64 L1520 404.82 L1538 775 Z" fill="url(#gv)"/><path d="M-20 775 L-20 404.97 L0 404.91 L20 404.81 L40 404.61 L60 404.31 L80 403.94 L100 403.51 L120 403.06 L140 402.65 L160 402.29 L180 401.97 L200 401.69 L220 401.40 L240 401.12 L260 400.84 L280 400.58 L300 400.33 L320 400.10 L340 399.87 L360 399.64 L380 399.40 L400 399.10 L420 398.74 L440 398.37 L460 398.00 L480 397.64 L500 397.35 L520 397.11 L540 396.90 L560 396.70 L580 396.53 L600 396.38 L620 396.25 L640 396.13 L660 396.02 L680 395.91 L700 395.84 L720 395.80 L740 395.80 L760 395.84 L780 395.90 L800 395.96 L820 396.03 L840 396.09 L860 396.18 L880 396.29 L900 396.43 L920 396.58 L940 396.75 L960 396.93 L980 397.10 L1000 397.29 L1020 397.50 L1040 397.73 L1060 397.98 L1080 398.25 L1100 398.52 L1120 398.80 L1140 399.09 L1160 399.38 L1180 399.68 L1200 399.99 L1220 400.31 L1240 400.62 L1260 400.93 L1280 401.25 L1300 401.56 L1320 401.88 L1340 402.19 L1360 402.51 L1380 402.82 L1400 403.13 L1420 403.45 L1440 403.76 L1460 404.08 L1480 404.39 L1500 404.64 L1520 404.82 L1538 775 Z" fill="url(#gh)"/></g></svg><svg style="position:absolute;left:0;top:0" width="1518" height="755" viewBox="0 0 1518 755"><line x1="17.64" y1="0" x2="17.64" y2="755" stroke="rgba(132,132,132,0.16)" stroke-width="1"/><line x1="58.57" y1="0" x2="58.57" y2="755" stroke="rgba(132,132,132,0.16)" stroke-width="1"/><line x1="99.50" y1="0" x2="99.50" y2="755" stroke="rgba(132,132,132,0.62)" stroke-width="1"/><line x1="140.43" y1="0" x2="140.43" y2="755" stroke="rgba(132,132,132,0.16)" stroke-width="1"/><line x1="181.36" y1="0" x2="181.36" y2="755" stroke="rgba(132,132,132,0.16)" stroke-width="1"/><line x1="222.29" y1="0" x2="222.29" y2="755" stroke="rgba(132,132,132,0.16)" stroke-width="1"/><line x1="263.22" y1="0" x2="263.22" y2="755" stroke="rgba(132,132,132,0.16)" stroke-width="1"/><line x1="304.15" y1="0" x2="304.15" y2="755" stroke="rgba(132,132,132,0.16)" stroke-width="1"/><line x1="345.08" y1="0" x2="345.08" y2="755" stroke="rgba(132,132,132,0.16)" stroke-width="1"/><line x1="386.01" y1="0" x2="386.01" y2="755" stroke="rgba(132,132,132,0.16)" stroke-width="1"/><line x1="426.94" y1="0" x2="426.94" y2="755" stroke="rgba(132,132,132,0.16)" stroke-width="1"/><line x1="467.87" y1="0" x2="467.87" y2="755" stroke="rgba(132,132,132,0.16)" stroke-width="1"/><line x1="508.80" y1="0" x2="508.80" y2="755" stroke="rgba(132,132,132,0.62)" stroke-width="1"/><line x1="549.73" y1="0" x2="549.73" y2="755" stroke="rgba(132,132,132,0.16)" stroke-width="1"/><line x1="590.66" y1="0" x2="590.66" y2="755" stroke="rgba(132,132,132,0.16)" stroke-width="1"/><line x1="631.59" y1="0" x2="631.59" y2="755" stroke="rgba(132,132,132,0.16)" stroke-width="1"/><line x1="672.52" y1="0" x2="672.52" y2="755" stroke="rgba(132,132,132,0.16)" stroke-width="1"/><line x1="713.45" y1="0" x2="713.45" y2="755" stroke="rgba(132,132,132,0.16)" stroke-width="1"/><line x1="754.38" y1="0" x2="754.38" y2="755" stroke="rgba(132,132,132,0.16)" stroke-width="1"/><line x1="795.31" y1="0" x2="795.31" y2="755" stroke="rgba(132,132,132,0.16)" stroke-width="1"/><line x1="836.24" y1="0" x2="836.24" y2="755" stroke="rgba(132,132,132,0.16)" stroke-width="1"/><line x1="877.17" y1="0" x2="877.17" y2="755" stroke="rgba(132,132,132,0.16)" stroke-width="1"/><line x1="918.10" y1="0" x2="918.10" y2="755" stroke="rgba(132,132,132,0.62)" stroke-width="1"/><line x1="959.03" y1="0" x2="959.03" y2="755" stroke="rgba(132,132,132,0.16)" stroke-width="1"/><line x1="999.96" y1="0" x2="999.96" y2="755" stroke="rgba(132,132,132,0.16)" stroke-width="1"/><line x1="1040.89" y1="0" x2="1040.89" y2="755" stroke="rgba(132,132,132,0.16)" stroke-width="1"/><line x1="1081.82" y1="0" x2="1081.82" y2="755" stroke="rgba(132,132,132,0.16)" stroke-width="1"/><line x1="1122.75" y1="0" x2="1122.75" y2="755" stroke="rgba(132,132,132,0.16)" stroke-width="1"/><line x1="1163.68" y1="0" x2="1163.68" y2="755" stroke="rgba(132,132,132,0.16)" stroke-width="1"/><line x1="1204.61" y1="0" x2="1204.61" y2="755" stroke="rgba(132,132,132,0.16)" stroke-width="1"/><line x1="1245.54" y1="0" x2="1245.54" y2="755" stroke="rgba(132,132,132,0.16)" stroke-width="1"/><line x1="1286.47" y1="0" x2="1286.47" y2="755" stroke="rgba(132,132,132,0.16)" stroke-width="1"/><line x1="1327.40" y1="0" x2="1327.40" y2="755" stroke="rgba(132,132,132,0.62)" stroke-width="1"/><line x1="1368.33" y1="0" x2="1368.33" y2="755" stroke="rgba(132,132,132,0.16)" stroke-width="1"/><line x1="1409.26" y1="0" x2="1409.26" y2="755" stroke="rgba(132,132,132,0.16)" stroke-width="1"/><line x1="1450.19" y1="0" x2="1450.19" y2="755" stroke="rgba(132,132,132,0.16)" stroke-width="1"/><line x1="1491.12" y1="0" x2="1491.12" y2="755" stroke="rgba(132,132,132,0.16)" stroke-width="1"/><line x1="0" y1="717.43" x2="1518" y2="717.43" stroke="rgba(132,132,132,0.16)" stroke-width="1"/><line x1="0" y1="676.50" x2="1518" y2="676.50" stroke="rgba(132,132,132,0.62)" stroke-width="1"/><line x1="0" y1="635.57" x2="1518" y2="635.57" stroke="rgba(132,132,132,0.16)" stroke-width="1"/><line x1="0" y1="594.64" x2="1518" y2="594.64" stroke="rgba(132,132,132,0.16)" stroke-width="1"/><line x1="0" y1="553.71" x2="1518" y2="553.71" stroke="rgba(132,132,132,0.16)" stroke-width="1"/><line x1="0" y1="512.78" x2="1518" y2="512.78" stroke="rgba(132,132,132,0.16)" stroke-width="1"/><line x1="0" y1="471.85" x2="1518" y2="471.85" stroke="rgba(132,132,132,0.16)" stroke-width="1"/><line x1="0" y1="430.92" x2="1518" y2="430.92" stroke="rgba(132,132,132,0.16)" stroke-width="1"/><line x1="0" y1="389.99" x2="1518" y2="389.99" stroke="rgba(132,132,132,0.16)" stroke-width="1"/><line x1="0" y1="349.06" x2="1518" y2="349.06" stroke="rgba(132,132,132,0.16)" stroke-width="1"/><line x1="0" y1="308.13" x2="1518" y2="308.13" stroke="rgba(132,132,132,0.16)" stroke-width="1"/><line x1="0" y1="267.20" x2="1518" y2="267.20" stroke="rgba(132,132,132,0.62)" stroke-width="1"/><line x1="0" y1="226.27" x2="1518" y2="226.27" stroke="rgba(132,132,132,0.16)" stroke-width="1"/><line x1="0" y1="185.34" x2="1518" y2="185.34" stroke="rgba(132,132,132,0.16)" stroke-width="1"/><line x1="0" y1="144.41" x2="1518" y2="144.41" stroke="rgba(132,132,132,0.16)" stroke-width="1"/><line x1="0" y1="103.48" x2="1518" y2="103.48" stroke="rgba(132,132,132,0.16)" stroke-width="1"/><line x1="0" y1="62.55" x2="1518" y2="62.55" stroke="rgba(132,132,132,0.16)" stroke-width="1"/><line x1="0" y1="21.62" x2="1518" y2="21.62" stroke="rgba(132,132,132,0.16)" stroke-width="1"/><circle cx="247.10000000000002" cy="529.1" r="134.6" fill="rgba(0,0,0,0.115)"/><circle cx="247.10000000000002" cy="529.1" r="140.89999999999998" fill="none" stroke="rgba(0,0,0,0.225)" stroke-width="12.6"/><circle cx="247.10000000000002" cy="529.1" r="147.89999999999998" fill="none" stroke="rgba(0,0,0,0.07)" stroke-width="1.6"/><circle cx="247.10000000000002" cy="529.1" r="134.1" fill="none" stroke="rgba(0,0,0,0.09)" stroke-width="1.6"/><g opacity="0.21" fill="#000" stroke="#000" stroke-width="2.4" stroke-linejoin="round"><path d="M247.10000000000002 417.6 L258.1 434.1 H236.10000000000002 Z"/><path d="M247.10000000000002 640.6 L258.1 624.1 H236.10000000000002 Z"/><path d="M135.60000000000002 529.1 L152.10000000000002 518.1 V540.1 Z"/><path d="M358.6 529.1 L342.1 518.1 V540.1 Z"/></g><circle cx="247.10000000000002" cy="529.1" r="39" fill="rgba(0,0,0,0.10)" stroke="rgba(0,0,0,0.19)" stroke-width="4"/><circle cx="999.9000000000001" cy="529.1" r="134.6" fill="rgba(0,0,0,0.115)"/><circle cx="999.9000000000001" cy="529.1" r="140.89999999999998" fill="none" stroke="rgba(0,0,0,0.225)" stroke-width="12.6"/><circle cx="999.9000000000001" cy="529.1" r="147.89999999999998" fill="none" stroke="rgba(0,0,0,0.07)" stroke-width="1.6"/><circle cx="999.9000000000001" cy="529.1" r="134.1" fill="none" stroke="rgba(0,0,0,0.09)" stroke-width="1.6"/><g opacity="0.21" fill="#000" stroke="#000" stroke-width="2.4" stroke-linejoin="round"><path d="M999.9000000000001 417.6 L1010.9000000000001 434.1 H988.9000000000001 Z"/><path d="M999.9000000000001 640.6 L1010.9000000000001 624.1 H988.9000000000001 Z"/><path d="M888.4000000000001 529.1 L904.9000000000001 518.1 V540.1 Z"/><path d="M1111.4 529.1 L1094.9 518.1 V540.1 Z"/></g><rect x="99.5" y="87.5" width="1048" height="589" fill="none" stroke="rgba(255,255,255,0.85)" stroke-width="1"/><rect x="99.5" y="381.5" width="295" height="295" fill="none" stroke="rgba(255,255,255,0.45)" stroke-width="1"/><g transform="translate(99.39999999999998,676.2) rotate(45)"><path d="M2.5 -0.8 L11.5 -3.6 L11.5 3.6 L2.5 0.8Z" fill="none" stroke="rgba(190,190,190,0.5)" stroke-width="1" stroke-linejoin="round"/></g><g transform="translate(99.39999999999998,676.2) rotate(135)"><path d="M2.5 -0.8 L11.5 -3.6 L11.5 3.6 L2.5 0.8Z" fill="none" stroke="rgba(190,190,190,0.5)" stroke-width="1" stroke-linejoin="round"/></g><g transform="translate(99.39999999999998,676.2) rotate(225)"><path d="M2.5 -0.8 L11.5 -3.6 L11.5 3.6 L2.5 0.8Z" fill="none" stroke="rgba(190,190,190,0.5)" stroke-width="1" stroke-linejoin="round"/></g><g transform="translate(99.39999999999998,676.2) rotate(315)"><path d="M2.5 -0.8 L11.5 -3.6 L11.5 3.6 L2.5 0.8Z" fill="none" stroke="rgba(190,190,190,0.5)" stroke-width="1" stroke-linejoin="round"/></g><line x1="0" y1="731.7" x2="1301.5" y2="0" stroke="#fff" stroke-width="1.35"/><line x1="0" y1="620.5" x2="242" y2="754" stroke="#fff" stroke-width="1.35"/><rect x="853.4999999999999" y="382.79999999999995" width="294.5" height="294.30000000000007" fill="none" stroke="rgba(40,30,35,0.45)" stroke-width="1"/><rect x="852.5999999999999" y="381.9" width="294.5" height="294.30000000000007" fill="none" stroke="#bdf0ba" stroke-width="1.3"/><defs><linearGradient id="hb" x1="0" y1="0" x2="0" y2="1"><stop offset="0" stop-color="#77aef8"/><stop offset="0.45" stop-color="#2f7dee"/><stop offset="1" stop-color="#0a5ad8"/></linearGradient></defs><circle cx="852.5999999999999" cy="381.9" r="4.4" fill="url(#hb)" stroke="#37414d" stroke-width="0.9"/><circle cx="1147.1" cy="381.9" r="4.4" fill="url(#hb)" stroke="#37414d" stroke-width="0.9"/><circle cx="852.5999999999999" cy="676.2" r="4.4" fill="url(#hb)" stroke="#37414d" stroke-width="0.9"/><circle cx="999.8" cy="529" r="5" fill="rgba(60,100,160,0.25)" stroke="#3f78c8" stroke-width="1.4"/><g transform="translate(1148.0,677.1) rotate(45)"><path d="M4.4 -1.5 L12.6 -4.1 L12.6 4.1 L4.4 1.5Z" fill="none" stroke="rgba(20,15,15,0.7)" stroke-width="1.4" stroke-linejoin="round"/></g><g transform="translate(1148.0,677.1) rotate(135)"><path d="M4.4 -1.5 L12.6 -4.1 L12.6 4.1 L4.4 1.5Z" fill="none" stroke="rgba(20,15,15,0.7)" stroke-width="1.4" stroke-linejoin="round"/></g><g transform="translate(1148.0,677.1) rotate(225)"><path d="M4.4 -1.5 L12.6 -4.1 L12.6 4.1 L4.4 1.5Z" fill="none" stroke="rgba(20,15,15,0.7)" stroke-width="1.4" stroke-linejoin="round"/></g><g transform="translate(1148.0,677.1) rotate(315)"><path d="M4.4 -1.5 L12.6 -4.1 L12.6 4.1 L4.4 1.5Z" fill="none" stroke="rgba(20,15,15,0.7)" stroke-width="1.4" stroke-linejoin="round"/></g><g transform="translate(1147.1,676.2) rotate(45)"><path d="M4.4 -1.5 L12.6 -4.1 L12.6 4.1 L4.4 1.5Z" fill="none" stroke="#fff" stroke-width="1.3" stroke-linejoin="round"/></g><g transform="translate(1147.1,676.2) rotate(135)"><path d="M4.4 -1.5 L12.6 -4.1 L12.6 4.1 L4.4 1.5Z" fill="none" stroke="#fff" stroke-width="1.3" stroke-linejoin="round"/></g><g transform="translate(1147.1,676.2) rotate(225)"><path d="M4.4 -1.5 L12.6 -4.1 L12.6 4.1 L4.4 1.5Z" fill="none" stroke="#fff" stroke-width="1.3" stroke-linejoin="round"/></g><g transform="translate(1147.1,676.2) rotate(315)"><path d="M4.4 -1.5 L12.6 -4.1 L12.6 4.1 L4.4 1.5Z" fill="none" stroke="#fff" stroke-width="1.3" stroke-linejoin="round"/></g><circle cx="1147.1" cy="676.2" r="4" fill="url(#hb)"/></svg><div style="position:absolute;left:2px;top:2px;width:38px;height:147px;background:#0d1116;border-radius:4px;"></div><div style="position:absolute;left:13px;top:8px;width:16px;height:1px;background:#626262"></div><div style="position:absolute;left:13px;top:11px;width:16px;height:1px;background:#626262"></div><div style="position:absolute;left:5px;top:20px;width:32px;height:20px;background:#585858;border-radius:3px 3px 0 0;"><svg style="position:absolute;left:8px;top:2px" width="16" height="16" viewBox="0 0 16 16"><g stroke="#dcdcdc" stroke-width="2" stroke-linecap="round" fill="none"><path d="M5.3 8.5 L4.5 3.6 M7.4 8 L7.2 1.9 M9.5 8 L9.9 2.4 M11.4 9 L12.7 4.6 M4.8 11.6 L2.2 8.6"/></g><path d="M4 7.6 L12.4 8 L11.7 12.6 Q10.9 15.2 8 15.2 Q5.4 15.2 4.6 13.2 Z" fill="#dcdcdc"/></svg></div><div style="position:absolute;left:5px;top:41px;width:32px;height:20px;background:#585858;border-radius:0;"><svg style="position:absolute;left:8px;top:2px" width="16" height="16" viewBox="0 0 16 16"><path d="M8 1.6 V14.4 M1.6 8 H14.4" stroke="#c8c8c8" stroke-width="1.5"/><path d="M5.7 3.9 L8 1.4 L10.3 3.9 M5.7 12.1 L8 14.6 L10.3 12.1 M3.9 5.7 L1.4 8 L3.9 10.3 M12.1 5.7 L14.6 8 L12.1 10.3" stroke="#c8c8c8" fill="none" stroke-width="1.4"/><rect x="6.6" y="6.6" width="2.8" height="2.8" fill="#585858"/></svg></div><div style="position:absolute;left:5px;top:62px;width:32px;height:20px;background:#585858;border-radius:0;"><svg style="position:absolute;left:8px;top:2px" width="16" height="16" viewBox="0 0 16 16"><path d="M8.8 2.2 A6 6 0 0 0 4.4 12.6 M7.2 13.8 A6 6 0 0 0 11.6 3.4" stroke="#c8c8c8" fill="none" stroke-width="1.3"/><path d="M1.8 13.6 H5.4 V10 M14.2 2.4 H10.6 V6" stroke="#c8c8c8" fill="none" stroke-width="1.3"/></svg></div><div style="position:absolute;left:5px;top:83px;width:32px;height:20px;background:#585858;border-radius:0;"><svg style="position:absolute;left:8px;top:2px" width="16" height="16" viewBox="0 0 16 16"><rect x="1.4" y="1.4" width="13.2" height="13.2" fill="none" stroke="#c8c8c8" stroke-width="1.2"/><rect x="1.4" y="10.6" width="4" height="4" fill="none" stroke="#c8c8c8" stroke-width="1.2"/><path d="M7.4 8.6 L12 4 M8.6 3.8 H12.2 V7.4" stroke="#c8c8c8" fill="none" stroke-width="1.2"/></svg></div><div style="position:absolute;left:5px;top:104px;width:32px;height:20px;background:#46607c;border-radius:0;"><svg style="position:absolute;left:8px;top:2px" width="16" height="16" viewBox="0 0 16 16"><path d="M4.8 2.3 H11.2 M4.8 13.7 H11.2 M2.3 4.8 V11.2 M13.7 4.8 V11.2" stroke="#fff" stroke-width="1.3"/><rect x="0.8" y="0.8" width="3.2" height="3.2" fill="#fff"/><rect x="12" y="0.8" width="3.2" height="3.2" fill="#fff"/><rect x="0.8" y="12" width="3.2" height="3.2" fill="#fff"/><rect x="12" y="12" width="3.2" height="3.2" fill="#fff"/></svg></div><div style="position:absolute;left:5px;top:125px;width:32px;height:20px;background:#585858;border-radius:0 0 3px 3px;"><svg style="position:absolute;left:8px;top:2px" width="16" height="16" viewBox="0 0 16 16"><path d="M3.2 4.4 A6.2 6.2 0 0 1 11.6 2.9 M12.8 11.6 A6.2 6.2 0 0 1 4.4 13.1 M2.1 10 A6.2 6.2 0 0 1 2.2 6.2 M13.9 6 A6.2 6.2 0 0 1 13.8 9.8" fill="none" stroke="#c8c8c8" stroke-width="1.1"/><path d="M8 3.6 V12.4 M3.6 8 H12.4" stroke="#c8c8c8" stroke-width="1.3"/><path d="M6.3 5.2 L8 3.3 L9.7 5.2 M6.3 10.8 L8 12.7 L9.7 10.8 M5.2 6.3 L3.3 8 L5.2 9.7 M10.8 6.3 L12.7 8 L10.8 9.7" stroke="#c8c8c8" fill="#c8c8c8" stroke-width="0.8"/><path d="M12.6 0.6 H15.4 V3.4 Z M3.4 15.4 H0.6 V12.6 Z" fill="#c8c8c8"/></svg></div></div>
<div style="position:absolute;left:0px;top:875px;width:1942px;height:19px;background:#282828;"></div>
<div style="position:absolute;left:272px;top:875px;width:86px;height:19px;background:#3c3c3c;border-radius:3px 3px 0 0;"></div>
<svg style="position:absolute;left:7px;top:879px;" width="13" height="11" viewBox="0 0 13 11"><path d="M0.5 1 H5 L6.3 2.6 H12.5 V10.5 H0.5Z" fill="#c4c4c4"/></svg>
<span id="t39" style="position:absolute;top:877.5px;line-height:16px;height:16px;font-size:12.5px;color:#d2d2d2;white-space:nowrap;left:23px;letter-spacing:0.16px;">Project</span>
<svg style="position:absolute;left:90px;top:879px;" width="13" height="11" viewBox="0 0 13 11"><path d="M1 1.5 L5 5.5 L1 9.5 M5 5.5 H11.5 M9 3 L11.7 5.5 L9 8" stroke="#c4c4c4" fill="none" stroke-width="1.3"/></svg>
<span id="t40" style="position:absolute;top:877.5px;line-height:16px;height:16px;font-size:12.5px;color:#d2d2d2;white-space:nowrap;left:105px;letter-spacing:-0.00px;">Animator</span>
<svg style="position:absolute;left:181px;top:879px;" width="12" height="12" viewBox="0 0 12 12"><circle cx="6" cy="6" r="5.6" fill="#c4c4c4"/><path d="M6 2.2 V6.3 H9.6" stroke="#282828" fill="none" stroke-width="1.3"/></svg>
<span id="t41" style="position:absolute;top:877.5px;line-height:16px;height:16px;font-size:12.5px;color:#d2d2d2;white-space:nowrap;left:197px;letter-spacing:0.05px;">Animation</span>
<svg style="position:absolute;left:279px;top:879px;" width="11" height="11" viewBox="0 0 11 11"><rect x="0.5" y="0.5" width="10" height="10" rx="1" fill="#c4c4c4"/><path d="M2.2 3 H8.8 M2.2 5.2 H8.8 M2.2 7.4 H8.8" stroke="#3c3c3c" stroke-width="1"/></svg>
<span id="t42" style="position:absolute;top:877.5px;line-height:16px;height:16px;font-size:12.5px;color:#d2d2d2;white-space:nowrap;left:295px;letter-spacing:0.02px;">Console</span>
<svg style="position:absolute;left:366px;top:879px;" width="13" height="11" viewBox="0 0 13 11"><path d="M2 0.5 V10.5 M6 0.5 V10.5 M10 0.5 V10.5" stroke="#c4c4c4" stroke-width="1.1"/><rect x="0.5" y="5.5" width="3" height="2.4" fill="#c4c4c4"/><rect x="4.5" y="2" width="3" height="2.4" fill="#c4c4c4"/><rect x="8.5" y="4" width="3" height="2.4" fill="#c4c4c4"/></svg>
<span id="t43" style="position:absolute;top:877.5px;line-height:16px;height:16px;font-size:12.5px;color:#d2d2d2;white-space:nowrap;left:383px;letter-spacing:0.00px;">Audio Mixer</span>
<svg style="position:absolute;left:1927px;top:878px;" width="4" height="12" viewBox="0 0 4 12"><circle cx="2" cy="1.8" r="1.2" fill="#c4c4c4"/><circle cx="2" cy="6" r="1.2" fill="#c4c4c4"/><circle cx="2" cy="10.2" r="1.2" fill="#c4c4c4"/></svg>
<div style="position:absolute;left:0px;top:894px;width:1942px;height:21px;background:#3c3c3c;"></div>
<div style="position:absolute;left:0px;top:914px;width:1942px;height:1px;background:#232323;"></div>
<div style="position:absolute;left:57px;top:894px;width:58px;height:20px;background:#505050;"></div>
<div style="position:absolute;left:56px;top:894px;width:1px;height:20px;background:#2c2c2c;"></div>
<div style="position:absolute;left:115px;top:894px;width:1px;height:20px;background:#2c2c2c;"></div>
<div style="position:absolute;left:189px;top:894px;width:1px;height:20px;background:#2c2c2c;"></div>
<div style="position:absolute;left:240px;top:894px;width:1px;height:20px;background:#2c2c2c;"></div>
<div style="position:absolute;left:39px;top:898px;width:1px;height:12px;background:#2c2c2c;"></div>
<span id="t44" style="position:absolute;top:896.7px;line-height:16px;height:16px;font-size:12.5px;color:#c4c4c4;white-space:nowrap;left:4px;letter-spacing:0.03px;">Clear</span>
<svg style="position:absolute;left:43px;top:901.5px;" width="9" height="6" viewBox="0 0 9 6"><polygon points="0.5,0.5 8.5,0.5 4.5,5" fill="#c4c4c4"/></svg>
<span id="t45" style="position:absolute;top:896.7px;line-height:16px;height:16px;font-size:12.5px;color:#c4c4c4;white-space:nowrap;left:60px;letter-spacing:-0.02px;">Collapse</span>
<span id="t46" style="position:absolute;top:896.7px;line-height:16px;height:16px;font-size:12.5px;color:#c4c4c4;white-space:nowrap;left:120px;letter-spacing:-0.29px;">Error Pause</span>
<span id="t47" style="position:absolute;top:896.7px;line-height:16px;height:16px;font-size:12.5px;color:#c4c4c4;white-space:nowrap;left:193px;letter-spacing:-0.11px;">Editor</span>
<svg style="position:absolute;left:227.5px;top:901px;" width="9" height="6" viewBox="0 0 9 6"><polygon points="0.5,0.5 8.5,0.5 4.5,5" fill="#c4c4c4"/></svg>
<div style="position:absolute;left:1537px;top:896px;width:300px;height:16px;background:#272727;border-radius:3px;border:1px solid #1e1e1e;box-sizing:border-box;"></div>
<svg style="position:absolute;left:1541px;top:899px;" width="10" height="10" viewBox="0 0 10 10"><circle cx="3.6" cy="3.6" r="2.4" fill="none" stroke="#c4c4c4" stroke-width="1.3"/><path d="M5.4 5.4 L8.6 8.6" stroke="#c4c4c4" stroke-width="1.5"/></svg>
<div style="position:absolute;left:1840px;top:894px;width:33px;height:20px;background:#4f4f4f;"></div>
<div style="position:absolute;left:1874px;top:894px;width:33px;height:20px;background:#4f4f4f;"></div>
<div style="position:absolute;left:1908px;top:894px;width:33px;height:20px;background:#4f4f4f;"></div>
<div style="position:absolute;left:1839px;top:894px;width:1px;height:20px;background:#2c2c2c;"></div>
<div style="position:absolute;left:1873px;top:894px;width:1px;height:20px;background:#2c2c2c;"></div>
<div style="position:absolute;left:1907px;top:894px;width:1px;height:20px;background:#2c2c2c;"></div>
<svg style="position:absolute;left:1844px;top:897px;" width="15" height="14" viewBox="0 0 15 14"><path d="M6.5 0.8 A5.6 5.6 0 1 1 6.5 12 A5.6 5.6 0 0 1 6.5 0.8Z M9 11 L12 13 L11.5 9.5Z" fill="#8c8c8c"/><path d="M6.5 3.2 V7.6" stroke="#4f4f4f" stroke-width="1.3"/><circle cx="6.5" cy="9.5" r="0.8" fill="#4f4f4f"/></svg>
<span id="t48" style="position:absolute;top:896.5px;line-height:16px;height:16px;font-size:12.5px;color:#c4c4c4;white-space:nowrap;left:1861px;">0</span>
<svg style="position:absolute;left:1878px;top:897px;" width="15" height="14" viewBox="0 0 15 14"><path d="M7 1 L13.4 12.6 H0.6Z" fill="#8c8c8c"/><path d="M7 5 V9" stroke="#4f4f4f" stroke-width="1.3"/><circle cx="7" cy="10.8" r="0.8" fill="#4f4f4f"/></svg>
<span id="t49" style="position:absolute;top:896.5px;line-height:16px;height:16px;font-size:12.5px;color:#c4c4c4;white-space:nowrap;left:1895px;">0</span>
<svg style="position:absolute;left:1912px;top:897px;" width="15" height="14" viewBox="0 0 15 14"><path d="M4.2 0.8 H9.8 L13.2 4.2 V9.8 L9.8 13.2 H4.2 L0.8 9.8 V4.2Z" fill="#e4e4e4"/><path d="M7 3.3 V8" stroke="#4f4f4f" stroke-width="1.4"/><circle cx="7" cy="10.3" r="0.9" fill="#4f4f4f"/></svg>
<span id="t50" style="position:absolute;top:896.5px;line-height:16px;height:16px;font-size:12.5px;color:#c4c4c4;white-space:nowrap;left:1929px;">0</span>
<div style="position:absolute;left:0px;top:915px;width:1942px;height:455px;background:#383838;"></div>
<div style="position:absolute;left:0px;top:1232px;width:1942px;height:1px;background:#2a2a2a;"></div>
<div style="position:absolute;left:1944px;top:73px;width:616px;height:19px;background:#282828;"></div>
<div style="position:absolute;left:1944px;top:73px;width:93px;height:19px;background:#3c3c3c;border-radius:3px 3px 0 0;"></div>
<svg style="position:absolute;left:1952px;top:78px;" width="11" height="11" viewBox="0 0 11 11"><circle cx="5.5" cy="5.5" r="5.2" fill="#c4c4c4"/><rect x="4.7" y="4.6" width="1.7" height="3.8" fill="#3c3c3c"/><circle cx="5.5" cy="2.9" r="0.95" fill="#3c3c3c"/></svg>
<span id="t51" style="position:absolute;top:75.5px;line-height:16px;height:16px;font-size:12.5px;color:#d2d2d2;white-space:nowrap;left:1968px;letter-spacing:0.06px;">Inspector</span>
<svg style="position:absolute;left:2047px;top:77px;" width="10" height="13" viewBox="0 0 10 13"><path d="M5 0.8 A3.7 3.7 0 0 1 7 7.4 V8.4 H3 V7.4 A3.7 3.7 0 0 1 5 0.8Z" fill="#c4c4c4"/><rect x="3.2" y="9.2" width="3.6" height="1.1" fill="#c4c4c4"/><rect x="3.8" y="10.9" width="2.4" height="1" fill="#c4c4c4"/></svg>
<span id="t52" style="position:absolute;top:75.5px;line-height:16px;height:16px;font-size:12.5px;color:#d2d2d2;white-space:nowrap;left:2062px;letter-spacing:0.15px;">Lighting</span>
<svg style="position:absolute;left:2523px;top:76px;" width="12" height="12" viewBox="0 0 12 12"><rect x="1.5" y="6" width="8" height="5" rx="1" fill="none" stroke="#c4c4c4" stroke-width="1.2"/><path d="M3 6 V4 A2.5 2.5 0 0 1 8 3.6" fill="none" stroke="#c4c4c4" stroke-width="1.2"/></svg>
<svg style="position:absolute;left:2544px;top:76px;" width="4" height="12" viewBox="0 0 4 12"><circle cx="2" cy="1.8" r="1.2" fill="#c4c4c4"/><circle cx="2" cy="6" r="1.2" fill="#c4c4c4"/><circle cx="2" cy="10.2" r="1.2" fill="#c4c4c4"/></svg>
<div style="position:absolute;left:1944px;top:92px;width:616px;height:785px;background:#383838;"></div>
<div style="position:absolute;left:1944px;top:92px;width:616px;height:50px;background:#3c3c3c;"></div>
<svg style="position:absolute;left:1951px;top:102px;" width="21" height="23" viewBox="0 0 21 23"><path d="M10.5 1.2 L19.6 5.8 V16.2 L10.5 21 L1.4 16.2 V5.8 Z M1.4 5.8 L10.5 10.6 L19.6 5.8 M10.5 10.6 V21" fill="none" stroke="#c8c8c8" stroke-width="1.4" stroke-linejoin="round"/></svg>
<svg style="position:absolute;left:1970px;top:122px;" width="8" height="5" viewBox="0 0 8 5"><polygon points="0.3,0.3 7.7,0.3 4,4.5" fill="#c4c4c4"/></svg>
<div style="position:absolute;left:1991px;top:103px;width:14px;height:14px;background:#262626;border-radius:2px;border:1px solid #1c1c1c;box-sizing:border-box;"></div>
<svg style="position:absolute;left:1991px;top:103px;" width="14" height="14" viewBox="0 0 14 14"><path d="M3 7.4 L5.8 10.2 L11 4.2" fill="none" stroke="#e6e6e6" stroke-width="1.6"/></svg>
<div style="position:absolute;left:2011px;top:101px;width:468px;height:18px;background:#2a2a2a;border-radius:3px;border:1px solid #212121;box-sizing:border-box;"></div>
<span id="t53" style="position:absolute;top:102.5px;line-height:16px;height:16px;font-size:12.5px;color:#e0e0e0;white-space:nowrap;left:2014px;letter-spacing:0.48px;">rightBg</span>
<div style="position:absolute;left:2483px;top:103px;width:14px;height:14px;background:#262626;border-radius:2px;border:1px solid #1c1c1c;box-sizing:border-box;"></div>
<span id="t54" style="position:absolute;top:102.5px;line-height:16px;height:16px;font-size:12.5px;color:#c4c4c4;white-space:nowrap;left:2501px;letter-spacing:0.29px;">Static</span>
<svg style="position:absolute;left:2545px;top:107.5px;" width="9" height="6" viewBox="0 0 9 6"><polygon points="0.5,0.5 8.5,0.5 4.5,5" fill="#c4c4c4"/></svg>
<span id="t55" style="position:absolute;top:126.5px;line-height:16px;height:16px;font-size:12.5px;color:#c4c4c4;white-space:nowrap;left:1984px;letter-spacing:0.28px;">Tag</span>
<div style="position:absolute;left:2011px;top:126px;width:251px;height:18px;background:#515151;border-radius:3px;"></div>
<span id="t56" style="position:absolute;top:126.5px;line-height:16px;height:16px;font-size:12.5px;color:#dcdcdc;white-space:nowrap;left:2014px;letter-spacing:-0.03px;">Untagged</span>
<svg style="position:absolute;left:2249px;top:132px;" width="9" height="6" viewBox="0 0 9 6"><polygon points="0.5,0.5 8.5,0.5 4.5,5" fill="#c4c4c4"/></svg>
<span id="t57" style="position:absolute;top:126.5px;line-height:16px;height:16px;font-size:12.5px;color:#c4c4c4;white-space:nowrap;left:2277px;letter-spacing:-0.06px;">Layer</span>
<div style="position:absolute;left:2313px;top:126px;width:243px;height:18px;background:#515151;border-radius:3px;"></div>
<span id="t58" style="position:absolute;top:126.5px;line-height:16px;height:16px;font-size:12.5px;color:#dcdcdc;white-space:nowrap;left:2316px;">UI</span>
<svg style="position:absolute;left:2541px;top:132px;" width="9" height="6" viewBox="0 0 9 6"><polygon points="0.5,0.5 8.5,0.5 4.5,5" fill="#c4c4c4"/></svg>
<div style="position:absolute;left:1943px;top:138px;width:620px;height:259px;background:#383838;"></div>
<div style="position:absolute;left:1948px;top:143px;width:612px;height:9px;background:#3c3c3c;"></div>
<div style="position:absolute;left:1948px;top:151px;width:612px;height:1px;background:#1a1a1a;"></div>
<div style="position:absolute;left:1948px;top:152px;width:612px;height:20px;background:#3e3e3e;"></div>
<div style="position:absolute;left:1948px;top:388px;width:612px;height:1px;background:#1a1a1a;"></div>
<div style="position:absolute;left:1948px;top:389px;width:612px;height:5px;background:#3e3e3e;"></div>
<svg style="position:absolute;left:1950px;top:158px;" width="10" height="9" viewBox="0 0 10 9"><polygon points="0.5,0.5 9.5,0.5 5,8" fill="#7d7d7d"/></svg>
<svg style="position:absolute;left:1965px;top:155.5px;" width="13" height="13" viewBox="0 0 13 13"><path d="M1 1 L5 2.2 L2.2 5Z M12 1 L8 2.2 L10.8 5Z M1 12 L5 10.8 L2.2 8Z M12 12 L8 10.8 L10.8 8Z" fill="#d0d0d0"/><path d="M3 3 L5.2 5.2 M10 3 L7.8 5.2 M3 10 L5.2 7.8 M10 10 L7.8 7.8" stroke="#d0d0d0" stroke-width="1.3"/></svg>
<span id="t59" style="position:absolute;top:154.8px;line-height:16px;height:16px;font-size:12.5px;color:#dcdcdc;white-space:nowrap;font-weight:bold;left:2004px;letter-spacing:-0.05px;">Rect Transform</span>
<svg style="position:absolute;left:2501px;top:156px;" width="12" height="12" viewBox="0 0 12 12"><circle cx="6" cy="6" r="5.5" fill="#c4c4c4"/><path d="M4.2 4.7 A1.9 1.9 0 1 1 6.6 6.5 Q6 6.8 6 7.6" fill="none" stroke="#3e3e3e" stroke-width="1.3"/><circle cx="6" cy="9.3" r="0.8" fill="#3e3e3e"/></svg>
<svg style="position:absolute;left:2521px;top:156px;" width="12" height="12" viewBox="0 0 12 12"><path d="M0.5 3.5 H7 M9.5 3.5 H11.5 M0.5 8.5 H2.5 M5 8.5 H11.5 M8.2 1.2 V5.8 M3.8 6.2 V10.8" stroke="#c4c4c4" stroke-width="1.3"/></svg>
<svg style="position:absolute;left:2544.5px;top:156px;" width="4" height="12" viewBox="0 0 4 12"><circle cx="2" cy="1.8" r="1.2" fill="#c4c4c4"/><circle cx="2" cy="6" r="1.2" fill="#c4c4c4"/><circle cx="2" cy="10.2" r="1.2" fill="#c4c4c4"/></svg>
<span id="t60" style="position:absolute;top:180.8px;line-height:14px;height:14px;font-size:10.5px;color:#bdbdbd;white-space:nowrap;left:1977px;letter-spacing:0.11px;">right</span>
<span id="t61" style="position:absolute;top:212.0px;line-height:14px;height:14px;font-size:10.5px;color:#bdbdbd;white-space:nowrap;left:1958.5px;transform:translateX(-50%);letter-spacing:0.15px;transform:translateX(-50%) rotate(-90deg);">bottom</span>
<div style="position:absolute;left:1971px;top:201px;width:35px;height:35px;background:#333;border:1px solid #8a8a8a;border-right-color:#c85050;border-bottom-color:#c85050;box-sizing:border-box;"></div>
<div style="position:absolute;left:1980px;top:210px;width:17px;height:17px;background:transparent;border:1px solid #a6a6a6;box-sizing:border-box;"></div>
<div style="position:absolute;left:2004px;top:234px;width:3px;height:3px;background:#e8a800;"></div>
<span id="t62" style="position:absolute;top:181.0px;line-height:16px;height:16px;font-size:12.5px;color:#c4c4c4;white-space:nowrap;left:2199px;letter-spacing:-0.47px;">Pos X</span>
<span id="t63" style="position:absolute;top:181.0px;line-height:16px;height:16px;font-size:12.5px;color:#c4c4c4;white-space:nowrap;left:2319px;letter-spacing:-0.42px;">Pos Y</span>
<span id="t64" style="position:absolute;top:181.0px;line-height:16px;height:16px;font-size:12.5px;color:#c4c4c4;white-space:nowrap;left:2439px;letter-spacing:-0.33px;">Pos Z</span>
<div style="position:absolute;left:2198px;top:197px;width:118px;height:17.4px;background:#2a2a2a;border-radius:3px;border:1px solid #212121;box-sizing:border-box;"></div>
<span id="t65" style="position:absolute;top:198.6px;line-height:16px;height:16px;font-size:12.5px;color:#d8d8d8;white-space:nowrap;left:2201px;">-720</span>
<div style="position:absolute;left:2318px;top:197px;width:118px;height:17.4px;background:#2a2a2a;border-radius:3px;border:1px solid #212121;box-sizing:border-box;"></div>
<span id="t66" style="position:absolute;top:198.6px;line-height:16px;height:16px;font-size:12.5px;color:#d8d8d8;white-space:nowrap;left:2321px;">0</span>
<div style="position:absolute;left:2438px;top:197px;width:118px;height:17.4px;background:#2a2a2a;border-radius:3px;border:1px solid #212121;box-sizing:border-box;"></div>
<span id="t67" style="position:absolute;top:198.6px;line-height:16px;height:16px;font-size:12.5px;color:#d8d8d8;white-space:nowrap;left:2441px;">0</span>
<span id="t68" style="position:absolute;top:217.0px;line-height:16px;height:16px;font-size:12.5px;color:#c4c4c4;white-space:nowrap;left:2199px;letter-spacing:0.01px;">Width</span>
<span id="t69" style="position:absolute;top:217.0px;line-height:16px;height:16px;font-size:12.5px;color:#c4c4c4;white-space:nowrap;left:2319px;letter-spacing:0.14px;">Height</span>
<div style="position:absolute;left:2198px;top:233.5px;width:118px;height:17px;background:#2a2a2a;border-radius:3px;border:1px solid #212121;box-sizing:border-box;"></div>
<span id="t70" style="position:absolute;top:234.5px;line-height:16px;height:16px;font-size:12.5px;color:#d8d8d8;white-space:nowrap;left:2201px;">720</span>
<div style="position:absolute;left:2318px;top:233.5px;width:118px;height:17px;background:#2a2a2a;border-radius:3px;border:1px solid #212121;box-sizing:border-box;"></div>
<span id="t71" style="position:absolute;top:234.5px;line-height:16px;height:16px;font-size:12.5px;color:#d8d8d8;white-space:nowrap;left:2321px;">720</span>
<div style="position:absolute;left:2505px;top:232px;width:24px;height:18px;background:#505050;border-radius:3px 0 0 3px;"></div>
<div style="position:absolute;left:2530px;top:232px;width:25px;height:18px;background:#505050;border-radius:0 3px 3px 0;"></div>
<svg style="position:absolute;left:2511px;top:235px;" width="12" height="12" viewBox="0 0 12 12"><rect x="1" y="1" width="9.5" height="9.5" fill="none" stroke="#9c9c9c" stroke-width="1.1" stroke-dasharray="2 1.6"/></svg>
<span id="t72" style="position:absolute;top:234.5px;line-height:14px;height:14px;font-size:11px;color:#9c9c9c;white-space:nowrap;left:2542.5px;transform:translateX(-50%);">R</span>
<svg style="position:absolute;left:1951px;top:259px;" width="10" height="9" viewBox="0 0 10 9"><polygon points="0.5,0.5 9.5,0.5 5,8" fill="#7d7d7d"/></svg>
<span id="t73" style="position:absolute;top:255.0px;line-height:16px;height:16px;font-size:12.5px;color:#c4c4c4;white-space:nowrap;left:1963px;letter-spacing:0.02px;">Anchors</span>
<span id="t74" style="position:absolute;top:273.0px;line-height:16px;height:16px;font-size:12.5px;color:#c4c4c4;white-space:nowrap;left:1978px;letter-spacing:0.28px;">Min</span>
<span id="t75" style="position:absolute;top:293.0px;line-height:16px;height:16px;font-size:12.5px;color:#c4c4c4;white-space:nowrap;left:1978px;letter-spacing:0.12px;">Max</span>
<span id="t76" style="position:absolute;top:273.0px;line-height:16px;height:16px;font-size:12.5px;color:#c4c4c4;white-space:nowrap;left:2199.5px;">X</span>
<div style="position:absolute;left:2210px;top:272.0px;width:106px;height:17px;background:#2a2a2a;border-radius:3px;border:1px solid #212121;box-sizing:border-box;"></div>
<span id="t77" style="position:absolute;top:273.0px;line-height:16px;height:16px;font-size:12.5px;color:#d8d8d8;white-space:nowrap;left:2213px;">1</span>
<span id="t78" style="position:absolute;top:273.0px;line-height:16px;height:16px;font-size:12.5px;color:#c4c4c4;white-space:nowrap;left:2319.5px;">Y</span>
<div style="position:absolute;left:2330px;top:272.0px;width:106px;height:17px;background:#2a2a2a;border-radius:3px;border:1px solid #212121;box-sizing:border-box;"></div>
<span id="t79" style="position:absolute;top:273.0px;line-height:16px;height:16px;font-size:12.5px;color:#d8d8d8;white-space:nowrap;left:2333px;">0</span>
<span id="t80" style="position:absolute;top:293.0px;line-height:16px;height:16px;font-size:12.5px;color:#c4c4c4;white-space:nowrap;left:2199.5px;">X</span>
<div style="position:absolute;left:2210px;top:292.0px;width:106px;height:17px;background:#2a2a2a;border-radius:3px;border:1px solid #212121;box-sizing:border-box;"></div>
<span id="t81" style="position:absolute;top:293.0px;line-height:16px;height:16px;font-size:12.5px;color:#d8d8d8;white-space:nowrap;left:2213px;">1</span>
<span id="t82" style="position:absolute;top:293.0px;line-height:16px;height:16px;font-size:12.5px;color:#c4c4c4;white-space:nowrap;left:2319.5px;">Y</span>
<div style="position:absolute;left:2330px;top:292.0px;width:106px;height:17px;background:#2a2a2a;border-radius:3px;border:1px solid #212121;box-sizing:border-box;"></div>
<span id="t83" style="position:absolute;top:293.0px;line-height:16px;height:16px;font-size:12.5px;color:#d8d8d8;white-space:nowrap;left:2333px;">0</span>
<span id="t84" style="position:absolute;top:315.0px;line-height:16px;height:16px;font-size:12.5px;color:#c4c4c4;white-space:nowrap;left:1963px;letter-spacing:0.24px;">Pivot</span>
<span id="t85" style="position:absolute;top:315.0px;line-height:16px;height:16px;font-size:12.5px;color:#c4c4c4;white-space:nowrap;left:2199.5px;">X</span>
<div style="position:absolute;left:2210px;top:314px;width:106px;height:17px;background:#2a2a2a;border-radius:3px;border:1px solid #212121;box-sizing:border-box;"></div>
<span id="t86" style="position:absolute;top:315.0px;line-height:16px;height:16px;font-size:12.5px;color:#d8d8d8;white-space:nowrap;left:2213px;">0</span>
<span id="t87" style="position:absolute;top:315.0px;line-height:16px;height:16px;font-size:12.5px;color:#c4c4c4;white-space:nowrap;left:2319.5px;">Y</span>
<div style="position:absolute;left:2330px;top:314px;width:106px;height:17px;background:#2a2a2a;border-radius:3px;border:1px solid #212121;box-sizing:border-box;"></div>
<span id="t88" style="position:absolute;top:315.0px;line-height:16px;height:16px;font-size:12.5px;color:#d8d8d8;white-space:nowrap;left:2333px;">0</span>
<span id="t89" style="position:absolute;top:343.0px;line-height:16px;height:16px;font-size:12.5px;color:#c4c4c4;white-space:nowrap;left:1963px;letter-spacing:0.05px;">Rotation</span>
<span id="t90" style="position:absolute;top:363.0px;line-height:16px;height:16px;font-size:12.5px;color:#c4c4c4;white-space:nowrap;left:1963px;letter-spacing:-0.06px;">Scale</span>
<span id="t91" style="position:absolute;top:343.0px;line-height:16px;height:16px;font-size:12.5px;color:#c4c4c4;white-space:nowrap;left:2202.5px;">X</span>
<div style="position:absolute;left:2216px;top:342.0px;width:100px;height:17px;background:#2a2a2a;border-radius:3px;border:1px solid #212121;box-sizing:border-box;"></div>
<span id="t92" style="position:absolute;top:343.0px;line-height:16px;height:16px;font-size:12.5px;color:#d8d8d8;white-space:nowrap;left:2219px;">0</span>
<span id="t93" style="position:absolute;top:343.0px;line-height:16px;height:16px;font-size:12.5px;color:#c4c4c4;white-space:nowrap;left:2322.5px;">Y</span>
<div style="position:absolute;left:2336px;top:342.0px;width:100px;height:17px;background:#2a2a2a;border-radius:3px;border:1px solid #212121;box-sizing:border-box;"></div>
<span id="t94" style="position:absolute;top:343.0px;line-height:16px;height:16px;font-size:12.5px;color:#d8d8d8;white-space:nowrap;left:2339px;">0</span>
<span id="t95" style="position:absolute;top:343.0px;line-height:16px;height:16px;font-size:12.5px;color:#c4c4c4;white-space:nowrap;left:2442px;">Z</span>
<div style="position:absolute;left:2456px;top:342.0px;width:100px;height:17px;background:#2a2a2a;border-radius:3px;border:1px solid #212121;box-sizing:border-box;"></div>
<span id="t96" style="position:absolute;top:343.0px;line-height:16px;height:16px;font-size:12.5px;color:#d8d8d8;white-space:nowrap;left:2459px;">0</span>
<span id="t97" style="position:absolute;top:363.0px;line-height:16px;height:16px;font-size:12.5px;color:#c4c4c4;white-space:nowrap;left:2202.5px;">X</span>
<div style="position:absolute;left:2216px;top:362.0px;width:100px;height:17px;background:#2a2a2a;border-radius:3px;border:1px solid #212121;box-sizing:border-box;"></div>
<span id="t98" style="position:absolute;top:363.0px;line-height:16px;height:16px;font-size:12.5px;color:#d8d8d8;white-space:nowrap;left:2219px;">1</span>
<span id="t99" style="position:absolute;top:363.0px;line-height:16px;height:16px;font-size:12.5px;color:#c4c4c4;white-space:nowrap;left:2322.5px;">Y</span>
<div style="position:absolute;left:2336px;top:362.0px;width:100px;height:17px;background:#2a2a2a;border-radius:3px;border:1px solid #212121;box-sizing:border-box;"></div>
<span id="t100" style="position:absolute;top:363.0px;line-height:16px;height:16px;font-size:12.5px;color:#d8d8d8;white-space:nowrap;left:2339px;">1</span>
<span id="t101" style="position:absolute;top:363.0px;line-height:16px;height:16px;font-size:12.5px;color:#c4c4c4;white-space:nowrap;left:2442px;">Z</span>
<div style="position:absolute;left:2456px;top:362.0px;width:100px;height:17px;background:#2a2a2a;border-radius:3px;border:1px solid #212121;box-sizing:border-box;"></div>
<span id="t102" style="position:absolute;top:363.0px;line-height:16px;height:16px;font-size:12.5px;color:#d8d8d8;white-space:nowrap;left:2459px;">1</span>
<svg style="position:absolute;left:2179px;top:364px;" width="14" height="12" viewBox="0 0 14 12"><path d="M5.5 3.2 H4.2 A2.8 2.8 0 0 0 4.2 8.8 H5.5 M8.5 3.2 H9.8 A2.8 2.8 0 0 1 9.8 8.8 H8.5 M4.8 6 H9.2" fill="none" stroke="#c4c4c4" stroke-width="1.2"/><path d="M2 0.8 L12 11.2" stroke="#c4c4c4" stroke-width="1.2"/></svg>
<div style="position:absolute;left:1944px;top:397px;width:616px;height:13px;background:#3e3e3e;"></div>
<svg style="position:absolute;left:1950px;top:395px;" width="10" height="9" viewBox="0 0 10 9"><polygon points="0.5,0.5 9.5,0.5 5,8" fill="#7d7d7d"/></svg>
<svg style="position:absolute;left:1964px;top:393px;" width="17" height="12" viewBox="0 0 17 12"><path d="M1 6 Q8.5 -1.5 16 6 Q8.5 13.5 1 6Z" fill="none" stroke="#c4c4c4" stroke-width="1.2"/><circle cx="8.5" cy="6" r="2.6" fill="none" stroke="#c4c4c4" stroke-width="1.2"/></svg>
<span id="t103" style="position:absolute;top:392.0px;line-height:16px;height:16px;font-size:12.5px;color:#dcdcdc;white-space:nowrap;font-weight:bold;left:2004px;letter-spacing:-0.12px;">Canvas Renderer</span>
<svg style="position:absolute;left:2501px;top:393px;" width="12" height="12" viewBox="0 0 12 12"><circle cx="6" cy="6" r="5.5" fill="#c4c4c4"/><path d="M4.2 4.7 A1.9 1.9 0 1 1 6.6 6.5 Q6 6.8 6 7.6" fill="none" stroke="#3e3e3e" stroke-width="1.3"/><circle cx="6" cy="9.3" r="0.8" fill="#3e3e3e"/></svg>
<svg style="position:absolute;left:2521px;top:393px;" width="12" height="12" viewBox="0 0 12 12"><path d="M0.5 3.5 H7 M9.5 3.5 H11.5 M0.5 8.5 H2.5 M5 8.5 H11.5 M8.2 1.2 V5.8 M3.8 6.2 V10.8" stroke="#c4c4c4" stroke-width="1.3"/></svg>
<svg style="position:absolute;left:2544.5px;top:393px;" width="4" height="12" viewBox="0 0 4 12"><circle cx="2" cy="1.8" r="1.2" fill="#c4c4c4"/><circle cx="2" cy="6" r="1.2" fill="#c4c4c4"/><circle cx="2" cy="10.2" r="1.2" fill="#c4c4c4"/></svg>
<span id="t104" style="position:absolute;top:416.0px;line-height:16px;height:16px;font-size:12.5px;color:#c4c4c4;white-space:nowrap;left:1963px;letter-spacing:0.03px;">Cull Transparent Mesh</span>
<div style="position:absolute;left:2201px;top:416px;width:14px;height:14px;background:#262626;border-radius:2px;border:1px solid #1c1c1c;box-sizing:border-box;"></div>
<svg style="position:absolute;left:2201px;top:416px;" width="14" height="14" viewBox="0 0 14 14"><path d="M3 7.4 L5.8 10.2 L11 4.2" fill="none" stroke="#e6e6e6" stroke-width="1.6"/></svg>
<div style="position:absolute;left:1944px;top:441px;width:616px;height:1px;background:#1a1a1a;"></div>
<div style="position:absolute;left:1944px;top:442px;width:616px;height:21px;background:#3e3e3e;"></div>
<svg style="position:absolute;left:1950px;top:448px;" width="10" height="9" viewBox="0 0 10 9"><polygon points="0.5,0.5 9.5,0.5 5,8" fill="#7d7d7d"/></svg>
<svg style="position:absolute;left:1965px;top:446px;" width="14" height="13" viewBox="0 0 14 13"><rect x="2" y="2" width="10" height="9" fill="none" stroke="#c4c4c4" stroke-width="1.2"/><path d="M3 10 L6 6 L8 8.5 L9.5 7 L11.5 10Z" fill="#c4c4c4"/><circle cx="9.3" cy="4.6" r="1" fill="#c4c4c4"/><path d="M0.6 3.5 V0.6 H3.5 M10.5 0.6 H13.4 V3.5 M0.6 9.5 V12.4 H3.5 M10.5 12.4 H13.4 V9.5" fill="none" stroke="#c4c4c4" stroke-width="1"/></svg>
<div style="position:absolute;left:1984px;top:446px;width:14px;height:14px;background:#262626;border-radius:2px;border:1px solid #1c1c1c;box-sizing:border-box;"></div>
<svg style="position:absolute;left:1984px;top:446px;" width="14" height="14" viewBox="0 0 14 14"><path d="M3 7.4 L5.8 10.2 L11 4.2" fill="none" stroke="#e6e6e6" stroke-width="1.6"/></svg>
<span id="t105" style="position:absolute;top:445.0px;line-height:16px;height:16px;font-size:12.5px;color:#dcdcdc;white-space:nowrap;font-weight:bold;left:2004px;letter-spacing:-0.03px;">Image</span>
<svg style="position:absolute;left:2501px;top:446.5px;" width="12" height="12" viewBox="0 0 12 12"><circle cx="6" cy="6" r="5.5" fill="#c4c4c4"/><path d="M4.2 4.7 A1.9 1.9 0 1 1 6.6 6.5 Q6 6.8 6 7.6" fill="none" stroke="#3e3e3e" stroke-width="1.3"/><circle cx="6" cy="9.3" r="0.8" fill="#3e3e3e"/></svg>
<svg style="position:absolute;left:2521px;top:446.5px;" width="12" height="12" viewBox="0 0 12 12"><path d="M0.5 3.5 H7 M9.5 3.5 H11.5 M0.5 8.5 H2.5 M5 8.5 H11.5 M8.2 1.2 V5.8 M3.8 6.2 V10.8" stroke="#c4c4c4" stroke-width="1.3"/></svg>
<svg style="position:absolute;left:2544.5px;top:446.5px;" width="4" height="12" viewBox="0 0 4 12"><circle cx="2" cy="1.8" r="1.2" fill="#c4c4c4"/><circle cx="2" cy="6" r="1.2" fill="#c4c4c4"/><circle cx="2" cy="10.2" r="1.2" fill="#c4c4c4"/></svg>
<span id="t106" style="position:absolute;top:469.0px;line-height:16px;height:16px;font-size:12.5px;color:#c4c4c4;white-space:nowrap;left:1963px;letter-spacing:-0.15px;">Source Image</span>
<div style="position:absolute;left:2201px;top:467.5px;width:355px;height:17px;background:#2a2a2a;border-radius:3px;border:1px solid #212121;box-sizing:border-box;"></div>
<span id="t107" style="position:absolute;top:468.5px;line-height:16px;height:16px;font-size:12.5px;color:#d8d8d8;white-space:nowrap;left:2204px;"></span>
<svg style="position:absolute;left:2205px;top:471px;" width="10" height="10" viewBox="0 0 10 10"><rect x="0.8" y="0.8" width="8.4" height="8.4" fill="none" stroke="#8f7ad1" stroke-width="1" stroke-dasharray="2.4 1.8"/><rect x="3.2" y="3.2" width="3.6" height="3.6" fill="#e8e8e8"/></svg>
<span id="t108" style="position:absolute;top:469.0px;line-height:16px;height:16px;font-size:12.5px;color:#d8d8d8;white-space:nowrap;left:2217px;letter-spacing:-0.09px;">joystick_circle_pad_a</span>
<div style="position:absolute;left:2537px;top:468.5px;width:18px;height:16px;background:#333;border-radius:0 3px 3px 0;"></div>
<svg style="position:absolute;left:2540px;top:470.5px;" width="12" height="12" viewBox="0 0 12 12"><circle cx="6" cy="6" r="4.6" fill="none" stroke="#c4c4c4" stroke-width="1.1"/><circle cx="6" cy="6" r="1.6" fill="#c4c4c4"/></svg>
<span id="t109" style="position:absolute;top:489.0px;line-height:16px;height:16px;font-size:12.5px;color:#c4c4c4;white-space:nowrap;left:1963px;letter-spacing:0.03px;">Color</span>
<div style="position:absolute;left:2201px;top:488px;width:336px;height:16px;background:#ffffff;border-radius:2px;"></div>
<svg style="position:absolute;left:2540px;top:489px;" width="14" height="14" viewBox="0 0 14 14"><path d="M2 12 L3 9 L8.5 3.5 L10.5 5.5 L5 11 Z" fill="#c4c4c4"/><path d="M8.8 2 L12 5.2 M9.5 4.5 L11.5 1.5 L12.7 2.6 Z" stroke="#c4c4c4" stroke-width="1.6" fill="#c4c4c4"/></svg>
<span id="t110" style="position:absolute;top:509.0px;line-height:16px;height:16px;font-size:12.5px;color:#c4c4c4;white-space:nowrap;left:1963px;letter-spacing:0.32px;">Material</span>
<div style="position:absolute;left:2201px;top:508px;width:355px;height:17px;background:#2a2a2a;border-radius:3px;border:1px solid #212121;box-sizing:border-box;"></div>
<span id="t111" style="position:absolute;top:509.0px;line-height:16px;height:16px;font-size:12.5px;color:#d8d8d8;white-space:nowrap;left:2204px;">None (Material)</span>
<div style="position:absolute;left:2537px;top:508.5px;width:18px;height:16px;background:#333;border-radius:0 3px 3px 0;"></div>
<svg style="position:absolute;left:2540px;top:510.5px;" width="12" height="12" viewBox="0 0 12 12"><circle cx="6" cy="6" r="4.6" fill="none" stroke="#c4c4c4" stroke-width="1.1"/><circle cx="6" cy="6" r="1.6" fill="#c4c4c4"/></svg>
<span id="t112" style="position:absolute;top:529.0px;line-height:16px;height:16px;font-size:12.5px;color:#c4c4c4;white-space:nowrap;left:1963px;letter-spacing:0.20px;">Raycast Target</span>
<div style="position:absolute;left:2201px;top:529px;width:14px;height:14px;background:#262626;border-radius:2px;border:1px solid #1c1c1c;box-sizing:border-box;"></div>
<svg style="position:absolute;left:2201px;top:529px;" width="14" height="14" viewBox="0 0 14 14"><path d="M3 7.4 L5.8 10.2 L11 4.2" fill="none" stroke="#e6e6e6" stroke-width="1.6"/></svg>
<svg style="position:absolute;left:1952px;top:552px;" width="9" height="10" viewBox="0 0 9 10"><polygon points="0.5,0.5 8,5 0.5,9.5" fill="#7d7d7d"/></svg>
<span id="t113" style="position:absolute;top:549.0px;line-height:16px;height:16px;font-size:12.5px;color:#c4c4c4;white-space:nowrap;left:1963px;letter-spacing:0.03px;">Raycast Padding</span>
<span id="t114" style="position:absolute;top:571.0px;line-height:16px;height:16px;font-size:12.5px;color:#c4c4c4;white-space:nowrap;left:1963px;letter-spacing:0.06px;">Maskable</span>
<div style="position:absolute;left:2201px;top:571px;width:14px;height:14px;background:#262626;border-radius:2px;border:1px solid #1c1c1c;box-sizing:border-box;"></div>
<svg style="position:absolute;left:2201px;top:571px;" width="14" height="14" viewBox="0 0 14 14"><path d="M3 7.4 L5.8 10.2 L11 4.2" fill="none" stroke="#e6e6e6" stroke-width="1.6"/></svg>
<span id="t115" style="position:absolute;top:591.0px;line-height:16px;height:16px;font-size:12.5px;color:#c4c4c4;white-space:nowrap;left:1963px;letter-spacing:-0.01px;">Image Type</span>
<div style="position:absolute;left:2201px;top:590px;width:355px;height:16px;background:#515151;border-radius:3px;"></div>
<span id="t116" style="position:absolute;top:590.5px;line-height:16px;height:16px;font-size:12.5px;color:#dcdcdc;white-space:nowrap;left:2205px;letter-spacing:-0.04px;">Simple</span>
<svg style="position:absolute;left:2541px;top:595.5px;" width="9" height="6" viewBox="0 0 9 6"><polygon points="0.5,0.5 8.5,0.5 4.5,5" fill="#c4c4c4"/></svg>
<span id="t117" style="position:absolute;top:611.0px;line-height:16px;height:16px;font-size:12.5px;color:#c4c4c4;white-space:nowrap;left:1978px;letter-spacing:-0.03px;">Use Sprite Mesh</span>
<div style="position:absolute;left:2201px;top:611px;width:14px;height:14px;background:#262626;border-radius:2px;border:1px solid #1c1c1c;box-sizing:border-box;"></div>
<span id="t118" style="position:absolute;top:631.0px;line-height:16px;height:16px;font-size:12.5px;color:#c4c4c4;white-space:nowrap;left:1978px;letter-spacing:0.07px;">Preserve Aspect</span>
<div style="position:absolute;left:2201px;top:631px;width:14px;height:14px;background:#262626;border-radius:2px;border:1px solid #1c1c1c;box-sizing:border-box;"></div>
<div style="position:absolute;left:2200px;top:649.5px;width:356px;height:16.5px;background:#585858;border-radius:3px;"></div>
<span id="t119" style="position:absolute;top:650.0px;line-height:16px;height:16px;font-size:12.5px;color:#e4e4e4;white-space:nowrap;left:2376px;transform:translateX(-50%);letter-spacing:0.10px;">Set Native Size</span>
<div style="position:absolute;left:1944px;top:675px;width:616px;height:1px;background:#1a1a1a;"></div>
<div style="position:absolute;left:1944px;top:676px;width:616px;height:54px;background:#3c3c3c;"></div>
<div style="position:absolute;left:1960px;top:682px;width:32px;height:32px;background:#505050;border-radius:2px;"></div>
<div style="position:absolute;left:1964px;top:686px;width:24px;height:24px;background:#ffffff;"></div>
<span id="t120" style="position:absolute;top:681.0px;line-height:17px;height:17px;font-size:13px;color:#c8c8c8;white-space:nowrap;left:2000px;letter-spacing:0.43px;">Default UI Material (Material)</span>
<svg style="position:absolute;left:2530px;top:683.5px;" width="12" height="12" viewBox="0 0 12 12"><circle cx="6" cy="6" r="5.5" fill="#c4c4c4"/><path d="M4.2 4.7 A1.9 1.9 0 1 1 6.6 6.5 Q6 6.8 6 7.6" fill="none" stroke="#3c3c3c" stroke-width="1.3"/><circle cx="6" cy="9.3" r="0.8" fill="#3c3c3c"/></svg>
<svg style="position:absolute;left:2550px;top:683.5px;" width="4" height="12" viewBox="0 0 4 12"><circle cx="2" cy="1.8" r="1.2" fill="#c4c4c4"/><circle cx="2" cy="6" r="1.2" fill="#c4c4c4"/><circle cx="2" cy="10.2" r="1.2" fill="#c4c4c4"/></svg>
<span id="t121" style="position:absolute;top:705.5px;line-height:16px;height:16px;font-size:12.5px;color:#8c8c8c;white-space:nowrap;left:1997px;letter-spacing:-0.05px;">Shader</span>
<div style="position:absolute;left:2049px;top:705px;width:412px;height:16px;background:#484848;border-radius:3px;"></div>
<span id="t122" style="position:absolute;top:705.0px;line-height:16px;height:16px;font-size:12.5px;color:#9a9a9a;white-space:nowrap;left:2052px;letter-spacing:0.14px;">UI/Default</span>
<svg style="position:absolute;left:2447px;top:710.5px;" width="9" height="6" viewBox="0 0 9 6"><polygon points="0.5,0.5 8.5,0.5 4.5,5" fill="#8a8a8a"/></svg>
<div style="position:absolute;left:2466px;top:705px;width:42px;height:16px;background:#585858;border-radius:3px;"></div>
<span id="t123" style="position:absolute;top:705.0px;line-height:16px;height:16px;font-size:12.5px;color:#e4e4e4;white-space:nowrap;left:2487px;transform:translateX(-50%);letter-spacing:-0.28px;">Edit...</span>
<div style="position:absolute;left:2513px;top:705px;width:43px;height:16px;background:#585858;border-radius:3px;"></div>
<svg style="position:absolute;left:2520px;top:708px;" width="12" height="10" viewBox="0 0 12 10"><path d="M0.5 1.5 H1.8 M3.5 1.5 H10.5 M3.5 5 H10.5 M3.5 8.5 H10.5 M1.2 5 H1.8 M1.2 8.5 H1.8" stroke="#c4c4c4" stroke-width="1.2"/></svg>
<svg style="position:absolute;left:2541px;top:710.5px;" width="9" height="6" viewBox="0 0 9 6"><polygon points="0.5,0.5 8.5,0.5 4.5,5" fill="#c4c4c4"/></svg>
<svg style="position:absolute;left:1951px;top:715px;" width="9" height="10" viewBox="0 0 9 10"><polygon points="0.5,0.5 8,5 0.5,9.5" fill="#7d7d7d"/></svg>
<div style="position:absolute;left:1944px;top:730px;width:616px;height:1px;background:#1a1a1a;"></div>
<div style="position:absolute;left:1944px;top:731px;width:616px;height:10px;background:#383838;"></div>
<div style="position:absolute;left:1944px;top:741px;width:616px;height:1px;background:#1a1a1a;"></div>
<div style="position:absolute;left:2138px;top:751px;width:228px;height:22px;background:#585858;border-radius:3px;"></div>
<span id="t124" style="position:absolute;top:754.0px;line-height:16px;height:16px;font-size:12.5px;color:#e4e4e4;white-space:nowrap;left:2252px;transform:translateX(-50%);letter-spacing:-0.03px;">Add Component</span>
<div style="position:absolute;left:1944px;top:877px;width:616px;height:1px;background:#1a1a1a;"></div>
<div style="position:absolute;left:1944px;top:878px;width:616px;height:21px;background:#3c3c3c;"></div>
<div style="position:absolute;left:1948px;top:878px;width:63px;height:20px;background:#3a3a3a;border-left:1px solid #2a2a2a;border-right:1px solid #2a2a2a;box-sizing:border-box;"></div>
<span id="t125" style="position:absolute;top:880.5px;line-height:16px;height:16px;font-size:12.5px;color:#d8d8d8;white-space:nowrap;left:1952px;letter-spacing:0.48px;">rightBg</span>
<svg style="position:absolute;left:1999px;top:885.5px;" width="9" height="6" viewBox="0 0 9 6"><polygon points="0.5,0.5 8.5,0.5 4.5,5" fill="#c4c4c4"/></svg>
<div style="position:absolute;left:2015px;top:886.5px;width:526px;height:1px;background:#5a5a5a;"></div>
<div style="position:absolute;left:2015px;top:889.5px;width:526px;height:1px;background:#5a5a5a;"></div>
<div style="position:absolute;left:2546px;top:878px;width:1px;height:20px;background:#2a2a2a;"></div>
<svg style="position:absolute;left:2550px;top:882px;" width="4" height="12" viewBox="0 0 4 12"><circle cx="2" cy="1.8" r="1.2" fill="#c4c4c4"/><circle cx="2" cy="6" r="1.2" fill="#c4c4c4"/><circle cx="2" cy="10.2" r="1.2" fill="#c4c4c4"/></svg>
<div style="position:absolute;left:1944px;top:898px;width:616px;height:1px;background:#1f1f1f;"></div>
<div style="position:absolute;left:1944px;top:899px;width:616px;height:464px;background:#303030;"></div>
<div style="position:absolute;left:2019px;top:899px;width:465px;height:464px;background:#474747;overflow:hidden;"><svg style="position:absolute;left:0;top:0" width="465" height="464" viewBox="0 0 465 464"><defs><pattern id="pa" x="0" y="-8.017" width="600" height="32.069" patternUnits="userSpaceOnUse"><rect width="600" height="16.034" fill="#474747"/><rect y="16.034" width="600" height="16.044" fill="#686868"/></pattern><pattern id="pb" x="0" y="-8.017" width="600" height="32.069" patternUnits="userSpaceOnUse"><rect width="600" height="16.034" fill="#686868"/><rect y="16.034" width="600" height="16.044" fill="#474747"/></pattern></defs><rect x="0" y="0" width="8.037" height="464" fill="url(#pa)"/><rect x="8.017" y="0" width="16.054" height="464" fill="url(#pb)"/><rect x="24.052" y="0" width="16.054" height="464" fill="url(#pa)"/><rect x="40.086" y="0" width="16.054" height="464" fill="url(#pb)"/><rect x="56.121" y="0" width="16.054" height="464" fill="url(#pa)"/><rect x="72.155" y="0" width="16.054" height="464" fill="url(#pb)"/><rect x="88.190" y="0" width="16.054" height="464" fill="url(#pa)"/><rect x="104.224" y="0" width="16.054" height="464" fill="url(#pb)"/><rect x="120.259" y="0" width="16.054" height="464" fill="url(#pa)"/><rect x="136.293" y="0" width="16.054" height="464" fill="url(#pb)"/><rect x="152.328" y="0" width="16.054" height="464" fill="url(#pa)"/><rect x="168.362" y="0" width="16.054" height="464" fill="url(#pb)"/><rect x="184.397" y="0" width="16.054" height="464" fill="url(#pa)"/><rect x="200.431" y="0" width="16.054" height="464" fill="url(#pb)"/><rect x="216.466" y="0" width="16.054" height="464" fill="url(#pa)"/><rect x="232.500" y="0" width="16.054" height="464" fill="url(#pb)"/><rect x="248.534" y="0" width="16.054" height="464" fill="url(#pa)"/><rect x="264.569" y="0" width="16.054" height="464" fill="url(#pb)"/><rect x="280.603" y="0" width="16.054" height="464" fill="url(#pa)"/><rect x="296.638" y="0" width="16.054" height="464" fill="url(#pb)"/><rect x="312.672" y="0" width="16.054" height="464" fill="url(#pa)"/><rect x="328.707" y="0" width="16.054" height="464" fill="url(#pb)"/><rect x="344.741" y="0" width="16.054" height="464" fill="url(#pa)"/><rect x="360.776" y="0" width="16.054" height="464" fill="url(#pb)"/><rect x="376.810" y="0" width="16.054" height="464" fill="url(#pa)"/><rect x="392.845" y="0" width="16.054" height="464" fill="url(#pb)"/><rect x="408.879" y="0" width="16.054" height="464" fill="url(#pa)"/><rect x="424.914" y="0" width="16.054" height="464" fill="url(#pb)"/><rect x="440.948" y="0" width="16.054" height="464" fill="url(#pa)"/><rect x="456.983" y="0" width="8.037" height="464" fill="url(#pb)"/><circle cx="232.5" cy="232.8" r="210.1" fill="rgba(0,0,0,0.19)"/><circle cx="232.5" cy="232.8" r="221.35" fill="none" stroke="rgba(0,0,0,0.39)" stroke-width="22.5"/><circle cx="232.5" cy="233.8" r="209.1" fill="none" stroke="rgba(0,0,0,0.16)" stroke-width="2.5"/><g opacity="0.42" fill="#000" stroke="#000" stroke-width="4" stroke-linejoin="round"><path d="M232.5 57.80000000000001 L249.0 82.80000000000001 H216.0 Z"/><path d="M232.5 407.8 L249.0 382.8 H216.0 Z"/><path d="M57.5 232.8 L82.5 216.3 V249.3 Z"/><path d="M407.5 232.8 L382.5 216.3 V249.3 Z"/></g></svg></div>
<span id="t126" style="position:absolute;top:1329.0px;line-height:16px;height:16px;font-size:12px;color:#e6e6e6;white-space:nowrap;font-weight:bold;left:2251px;transform:translateX(-50%);letter-spacing:0.19px;text-shadow:0 1px 1px #000,0 0 2px #000;">rightBg</span>
<span id="t127" style="position:absolute;top:1344.0px;line-height:16px;height:16px;font-size:12px;color:#e6e6e6;white-space:nowrap;font-weight:bold;left:2251px;transform:translateX(-50%);letter-spacing:0.31px;text-shadow:0 1px 1px #000,0 0 2px #000;">Image Size: 256x256</span>
<div style="position:absolute;left:1944px;top:1363px;width:616px;height:1px;background:#232323;"></div>
<div style="position:absolute;left:1944px;top:1364px;width:616px;height:6px;background:#383838;"></div>
<div style="position:absolute;left:2454px;top:1372px;width:1px;height:20px;background:#222222;"></div>
<div style="position:absolute;left:2480px;top:1372px;width:1px;height:20px;background:#222222;"></div>
<div style="position:absolute;left:2507px;top:1372px;width:1px;height:20px;background:#222222;"></div>
<div style="position:absolute;left:2533px;top:1372px;width:1px;height:20px;background:#222222;"></div>
<svg style="position:absolute;left:2458.5px;top:1373.5px" width="17" height="17" viewBox="0 0 16 16"><ellipse cx="8" cy="9" rx="3.4" ry="4.4" fill="#c4c4c4"/><circle cx="8" cy="4.3" r="1.9" fill="#c4c4c4"/><path d="M2.5 6 L5 8 M2 10 H4.6 M2.8 14 L5 11.5 M13.5 6 L11 8 M14 10 H11.4 M13.2 14 L11 11.5" stroke="#c4c4c4" stroke-width="1.1"/><path d="M2 2 L14 14.5" stroke="#191919" stroke-width="2.4"/><path d="M2.5 1.5 L14.5 14" stroke="#c4c4c4" stroke-width="1.1"/></svg>
<svg style="position:absolute;left:2484.5px;top:1373.5px" width="17" height="17" viewBox="0 0 16 16"><ellipse cx="8" cy="4.5" rx="5.2" ry="2.2" fill="#c4c4c4"/><path d="M2.8 6.3 V8.3 A5.2 2.2 0 0 0 13.2 8.3 V6.3 A5.2 2.2 0 0 1 2.8 6.3Z M2.8 10 V12 A5.2 2.2 0 0 0 13.2 12 V10 A5.2 2.2 0 0 1 2.8 10Z" fill="#c4c4c4"/><path d="M2 2 L14 14.5" stroke="#191919" stroke-width="2.4"/><path d="M2.5 1.5 L14.5 14" stroke="#c4c4c4" stroke-width="1.1"/></svg>
<svg style="position:absolute;left:2512.0px;top:1373.5px" width="17" height="17" viewBox="0 0 16 16"><path d="M2.6 6.8 A5.6 5.6 0 0 1 12.6 4.6 M13.4 9.2 A5.6 5.6 0 0 1 3.4 11.4" fill="none" stroke="#c4c4c4" stroke-width="1.4"/><path d="M13.8 2.2 V5.6 H10.4Z M2.2 13.8 V10.4 H5.6Z" fill="#c4c4c4"/><circle cx="8" cy="6.6" r="2" fill="#c4c4c4"/><circle cx="8" cy="11.2" r="0.9" fill="#c4c4c4"/><path d="M2 2 L14 14.5" stroke="#191919" stroke-width="2.4"/><path d="M2.5 1.5 L14.5 14" stroke="#c4c4c4" stroke-width="1.1"/></svg>
<svg style="position:absolute;left:2537.5px;top:1373.5px" width="17" height="17" viewBox="0 0 16 16"><circle cx="8" cy="8" r="6" fill="none" stroke="#c4c4c4" stroke-width="1.2"/><path d="M5 8.2 L7.2 10.4 L11 5.8" fill="none" stroke="#c4c4c4" stroke-width="1.3"/></svg>
<div style="position:absolute;left:1942.6px;top:137.6px;width:617.4px;height:259.6px;background:transparent;border:5px solid #7fd6fd;border-right-width:4px;border-radius:6px;box-sizing:border-box;"></div>
</div></body></html>
